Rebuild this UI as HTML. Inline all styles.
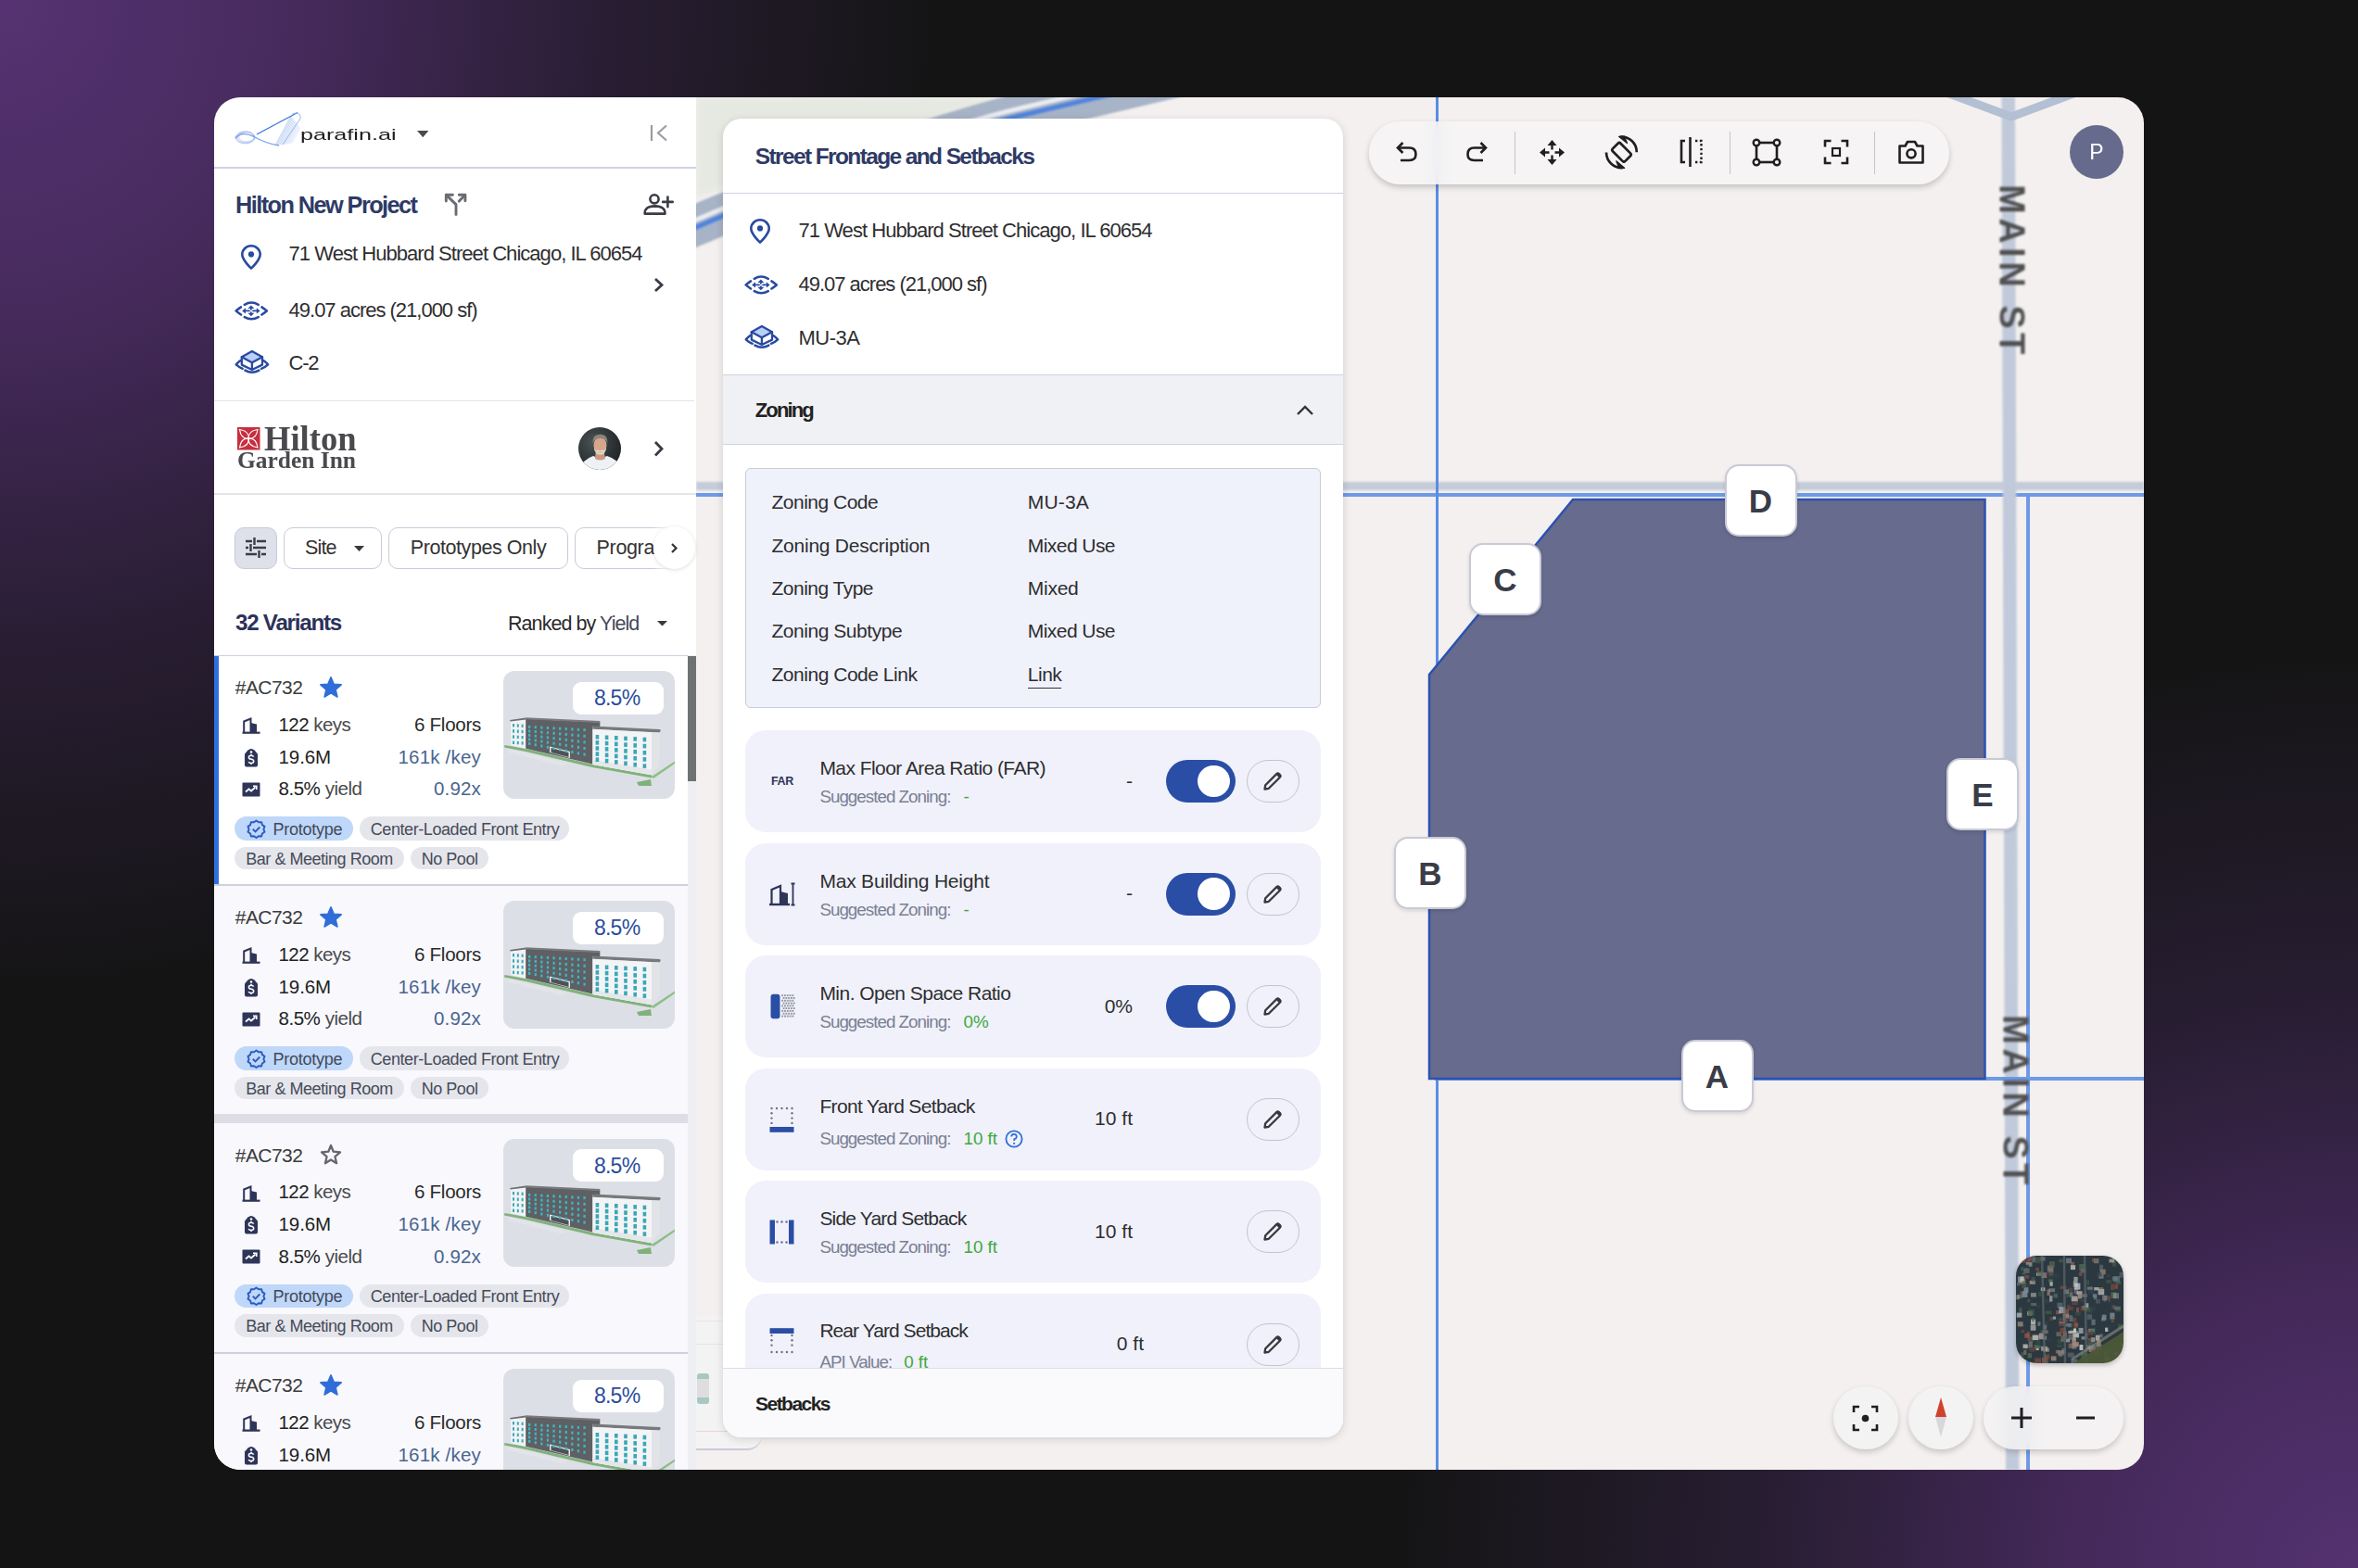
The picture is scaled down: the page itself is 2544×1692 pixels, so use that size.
<!DOCTYPE html>
<html><head><meta charset="utf-8"><style>
html,body{margin:0;padding:0;}
body{width:2544px;height:1692px;position:relative;overflow:hidden;
background:
 radial-gradient(ellipse 1020px 1080px at 0px 0px, rgba(86,50,114,1) 0%, rgba(78,46,104,0.88) 30%, rgba(60,38,80,0.5) 65%, rgba(20,20,20,0) 100%),
 radial-gradient(ellipse 1050px 1000px at 2544px 1692px, rgba(84,50,112,1) 0%, rgba(77,45,103,0.86) 28%, rgba(58,38,78,0.5) 62%, rgba(20,20,20,0) 100%),
 #141414;}
#win{position:absolute;left:0;top:0;width:2544px;height:1692px;clip-path:inset(105px 231px 106px 231px round 28px);}
</style></head><body><div id="win">
<div style="position:absolute;left:751.00px;top:105.00px;width:1562.00px;height:1481.00px;background:#f3f0ef;"></div>
<svg style="position:absolute;left:751.00px;top:105.00px;" width="400.00" height="130.00" viewBox="0 0 400 130"><path d="M0 0 L330 0 L0 108 Z" fill="#e6e9e1" style="filter:blur(3px)"/></svg>
<svg style="position:absolute;left:751.00px;top:105.00px;" width="700.00" height="240.00" viewBox="0 0 700 240"><g fill="none" style="filter:blur(0.8px)"><path d="M-40 155 L29 126 Q249 42 349 18 L560 -32" stroke="#a7b3c6" stroke-width="44"/><path d="M-40 149 L29 120 Q249 36 349 12 L560 -38" stroke="#e9ecf1" stroke-width="5"/><path d="M-40 157 L29 128 Q249 44 349 20 L560 -30" stroke="#4f83df" stroke-width="5"/></g></svg>
<div style="position:absolute;left:751.00px;top:519.50px;width:1562.00px;height:9.00px;background:#c5ccd9;filter:blur(1.2px);"></div>
<div style="position:absolute;left:751.00px;top:531.50px;width:1562.00px;height:4.00px;background:#6d9ae8;"></div>
<svg style="position:absolute;left:2150.00px;top:105.00px;" width="40.00" height="1481.00" viewBox="0 0 40 1481"><path d="M9.5 0 H24 L28.5 1481 H14Z" fill="#c1cadb" style="filter:blur(1px)"/></svg>
<svg style="position:absolute;left:2090.00px;top:100.00px;" width="150.00" height="34.00" viewBox="0 0 150 34"><path d="M10 0 L80 26 L150 0" stroke="#b3bfd2" stroke-width="9" fill="none"/></svg>
<div style="position:absolute;left:1548.50px;top:105.00px;width:3.50px;height:1481.00px;background:#5b8de6;"></div>
<div style="position:absolute;left:2186.00px;top:534.00px;width:4.00px;height:1052.00px;background:#6d9ae8;"></div>
<div style="position:absolute;left:1548.00px;top:1162.00px;width:765.00px;height:4.00px;background:#6d9ae8;"></div>
<svg style="position:absolute;left:1540.00px;top:537.00px;" width="604.00" height="630.00" viewBox="0 0 604 630"><path d="M157 2 L601.5 2 L601.5 627 L2 627 L2 191 Z" fill="#676b8d" stroke="#2c52b0" stroke-width="2.5"/></svg>
<div style="position:absolute;left:2169.5px;top:292.5px;transform:translate(-50%,-50%) rotate(90deg);font-family:'Liberation Sans',sans-serif;font-weight:700;font-size:38px;letter-spacing:4.5px;color:#505052;white-space:pre;filter:blur(0.9px);">MAIN ST</div>
<div style="position:absolute;left:2173.5px;top:1188.5px;transform:translate(-50%,-50%) rotate(90deg);font-family:'Liberation Sans',sans-serif;font-weight:700;font-size:38px;letter-spacing:4.5px;color:#505052;white-space:pre;filter:blur(0.9px);">MAIN ST</div>
<div style="position:absolute;left:1860.50px;top:501.00px;width:78.00px;height:78.00px;background:#fff;border:2.5px solid #c9cad6;box-sizing:border-box;border-radius:15px;box-shadow:0 2px 4px rgba(0,0,0,0.12);"></div>
<div style="position:absolute;left:1886.86px;top:522.87px;font-family:'Liberation Sans',sans-serif;font-size:35px;line-height:1;font-weight:700;color:#3a3c48;letter-spacing:0.000px;white-space:pre;">D</div>
<div style="position:absolute;left:1585.00px;top:586.00px;width:78.00px;height:78.00px;background:#fff;border:2.5px solid #c9cad6;box-sizing:border-box;border-radius:15px;box-shadow:0 2px 4px rgba(0,0,0,0.12);"></div>
<div style="position:absolute;left:1611.36px;top:607.87px;font-family:'Liberation Sans',sans-serif;font-size:35px;line-height:1;font-weight:700;color:#3a3c48;letter-spacing:0.000px;white-space:pre;">C</div>
<div style="position:absolute;left:2100.00px;top:818.00px;width:78.00px;height:78.00px;background:#fff;border:2.5px solid #c9cad6;box-sizing:border-box;border-radius:15px;box-shadow:0 2px 4px rgba(0,0,0,0.12);"></div>
<div style="position:absolute;left:2127.32px;top:839.87px;font-family:'Liberation Sans',sans-serif;font-size:35px;line-height:1;font-weight:700;color:#3a3c48;letter-spacing:0.000px;white-space:pre;">E</div>
<div style="position:absolute;left:1504.00px;top:903.00px;width:78.00px;height:78.00px;background:#fff;border:2.5px solid #c9cad6;box-sizing:border-box;border-radius:15px;box-shadow:0 2px 4px rgba(0,0,0,0.12);"></div>
<div style="position:absolute;left:1530.36px;top:924.87px;font-family:'Liberation Sans',sans-serif;font-size:35px;line-height:1;font-weight:700;color:#3a3c48;letter-spacing:0.000px;white-space:pre;">B</div>
<div style="position:absolute;left:1813.50px;top:1122.00px;width:78.00px;height:78.00px;background:#fff;border:2.5px solid #c9cad6;box-sizing:border-box;border-radius:15px;box-shadow:0 2px 4px rgba(0,0,0,0.12);"></div>
<div style="position:absolute;left:1839.86px;top:1143.87px;font-family:'Liberation Sans',sans-serif;font-size:35px;line-height:1;font-weight:700;color:#3a3c48;letter-spacing:0.000px;white-space:pre;">A</div>
<div style="position:absolute;left:1477.00px;top:131.00px;width:625.50px;height:68.00px;background:rgba(246,245,245,0.80);backdrop-filter:blur(7px);-webkit-backdrop-filter:blur(7px);border-radius:34px;box-shadow:0 3px 6px rgba(0,0,0,0.20);"></div>
<svg style="position:absolute;left:1504.00px;top:150.00px;" width="28.00" height="28.00" viewBox="0 0 28 28"><path d="M9.5 4 L4 9.5 L9.5 15" fill="none" stroke="#1f1f22" stroke-width="2.6"/><path d="M4.5 9.5 H16.5 Q23.5 9.5 23.5 16.5 Q23.5 23 16.5 23 H7" fill="none" stroke="#1f1f22" stroke-width="2.6"/></svg>
<svg style="position:absolute;left:1579.00px;top:150.00px;" width="28.00" height="28.00" viewBox="0 0 28 28"><path d="M18.5 4 L24 9.5 L18.5 15" fill="none" stroke="#1f1f22" stroke-width="2.6"/><path d="M23.5 9.5 H11.5 Q4.5 9.5 4.5 16.5 Q4.5 23 11.5 23 H21" fill="none" stroke="#1f1f22" stroke-width="2.6"/></svg>
<div style="position:absolute;left:1633.50px;top:141.50px;width:1.50px;height:46.20px;background:#c4c4cc;"></div>
<svg style="position:absolute;left:1660.00px;top:150.00px;" width="29.00" height="29.00" viewBox="0 0 29 29"><path d="M14.5 5 V11.5 M14.5 17.5 V24 M5 14.5 H11.5 M17.5 14.5 H24" stroke="#1f1f22" stroke-width="2.4"/><path d="M14.5 1 L9.5 7 H19.5Z M14.5 28 L9.5 22 H19.5Z M1 14.5 L7 9.5 V19.5Z M28 14.5 L22 9.5 V19.5Z" fill="#1f1f22"/></svg>
<svg style="position:absolute;left:1731.00px;top:146.00px;" width="37.00" height="37.00" viewBox="0 0 37 37"><rect x="9" y="12.3" width="19" height="12" rx="2" transform="rotate(45 18.5 18.3)" fill="none" stroke="#1f1f22" stroke-width="2.7"/><path d="M17 1.6 A16.6 16.6 0 0 1 34.8 18.3" fill="none" stroke="#1f1f22" stroke-width="2.7"/><path d="M15.5 1.4 L21.5 1.2 L24.5 8.6 Z" fill="#1f1f22" stroke="#1f1f22" stroke-width="1.2" stroke-linejoin="round"/><path d="M2 18.5 A16.6 16.6 0 0 0 20 35" fill="none" stroke="#1f1f22" stroke-width="2.7"/><path d="M21.6 35.3 L15.6 35.4 L12.8 27.8 Z" fill="#1f1f22" stroke="#1f1f22" stroke-width="1.2" stroke-linejoin="round"/></svg>
<svg style="position:absolute;left:1811.00px;top:147.00px;" width="29.00" height="34.00" viewBox="0 0 29 34"><path d="M7 5 H3 V28 H7" fill="none" stroke="#1f1f22" stroke-width="2.6"/><path d="M12.5 1 V33" stroke="#1f1f22" stroke-width="2.6"/><path d="M18 5 H24.5 V28 H18" fill="none" stroke="#1f1f22" stroke-width="2.4" stroke-dasharray="2.4 2.4"/></svg>
<div style="position:absolute;left:1865.50px;top:141.50px;width:1.50px;height:46.20px;background:#c4c4cc;"></div>
<svg style="position:absolute;left:1890.00px;top:149.00px;" width="32.00" height="31.00" viewBox="0 0 32 31"><rect x="5" y="5" width="22" height="21" fill="none" stroke="#1f1f22" stroke-width="2.6"/><g fill="#f6f5f5" stroke="#1f1f22" stroke-width="2.4"><circle cx="5" cy="5" r="3.3"/><circle cx="27" cy="5" r="3.3"/><circle cx="5" cy="26" r="3.3"/><circle cx="27" cy="26" r="3.3"/></g></svg>
<svg style="position:absolute;left:1967.00px;top:150.00px;" width="28.00" height="28.00" viewBox="0 0 28 28"><path d="M2 8.5 V2 H8.5 M19.5 2 H26 V8.5 M26 19.5 V26 H19.5 M8.5 26 H2 V19.5" fill="none" stroke="#1f1f22" stroke-width="2.6"/><rect x="10" y="10" width="8" height="8" fill="none" stroke="#1f1f22" stroke-width="2.2"/></svg>
<div style="position:absolute;left:2021.50px;top:141.50px;width:1.50px;height:46.20px;background:#c4c4cc;"></div>
<svg style="position:absolute;left:2047.00px;top:150.00px;" width="30.00" height="28.00" viewBox="0 0 30 28"><path d="M2.5 7.5 H8.5 L11 3 H19 L21.5 7.5 H27.5 V25.5 H2.5 Z" fill="none" stroke="#1f1f22" stroke-width="2.6" stroke-linejoin="round"/><circle cx="15" cy="15.8" r="4.6" fill="none" stroke="#1f1f22" stroke-width="2.6"/></svg>
<div style="position:absolute;left:2233.00px;top:135.00px;width:58.00px;height:58.00px;background:#666b8e;border-radius:50%;"></div>
<div style="position:absolute;left:2254.33px;top:153.03px;font-family:'Liberation Sans',sans-serif;font-size:23px;line-height:1;font-weight:400;color:#ffffff;letter-spacing:0.000px;white-space:pre;">P</div>
<div style="position:absolute;left:2175.2px;top:1355.2px;width:116px;height:116px;border-radius:22px;overflow:hidden;box-shadow:0 2px 5px rgba(0,0,0,0.25);"><svg width="116" height="116" viewBox="0 0 116 116" style="filter:blur(0.6px)"><rect width="116" height="116" fill="#2b3840"/><rect x="50.7" y="62.7" width="6.7" height="4.9" fill="#a88a7a" opacity="0.83"/><rect x="21.3" y="90.0" width="4.9" height="5.5" fill="#3f5a44" opacity="0.49"/><rect x="34.0" y="10.2" width="6.2" height="5.8" fill="#8f5a4c" opacity="0.72"/><rect x="44.4" y="50.7" width="6.0" height="5.6" fill="#7d8f98" opacity="0.46"/><rect x="59.2" y="6.7" width="3.8" height="4.0" fill="#8f5a4c" opacity="0.80"/><rect x="36.5" y="66.2" width="3.8" height="3.9" fill="#7e4a40" opacity="0.67"/><rect x="74.2" y="51.2" width="4.1" height="7.0" fill="#b9b6b0" opacity="0.77"/><rect x="35.3" y="25.7" width="4.2" height="3.3" fill="#b9b6b0" opacity="0.63"/><rect x="94.8" y="43.3" width="6.8" height="6.4" fill="#8f5a4c" opacity="0.55"/><rect x="103.8" y="5.9" width="4.5" height="5.8" fill="#4f6a50" opacity="0.48"/><rect x="70.5" y="87.2" width="4.1" height="3.3" fill="#cfd3d6" opacity="0.46"/><rect x="45.9" y="103.4" width="3.5" height="5.8" fill="#8f5a4c" opacity="0.48"/><rect x="89.3" y="19.9" width="5.2" height="4.8" fill="#6d7a80" opacity="0.89"/><rect x="86.2" y="47.0" width="4.5" height="4.6" fill="#6d7a80" opacity="0.45"/><rect x="96.8" y="109.2" width="5.4" height="7.0" fill="#8f5a4c" opacity="0.54"/><rect x="44.2" y="95.7" width="5.6" height="3.4" fill="#3f5a44" opacity="0.55"/><rect x="28.9" y="86.5" width="4.3" height="4.2" fill="#b9b6b0" opacity="0.48"/><rect x="23.4" y="71.3" width="3.1" height="4.5" fill="#7d8f98" opacity="0.65"/><rect x="107.4" y="54.2" width="5.3" height="6.5" fill="#3f5a44" opacity="0.73"/><rect x="34.8" y="25.6" width="5.4" height="5.9" fill="#3f5a44" opacity="0.78"/><rect x="105.3" y="22.0" width="6.8" height="6.5" fill="#7d8f98" opacity="0.49"/><rect x="5.3" y="12.2" width="5.0" height="4.0" fill="#4f6a50" opacity="0.57"/><rect x="92.3" y="66.8" width="4.2" height="3.7" fill="#b9b6b0" opacity="0.51"/><rect x="53.7" y="73.2" width="5.5" height="3.3" fill="#6d7a80" opacity="0.86"/><rect x="22.8" y="1.9" width="4.1" height="4.8" fill="#8f5a4c" opacity="0.47"/><rect x="31.6" y="59.5" width="6.9" height="3.4" fill="#3f5a44" opacity="0.85"/><rect x="109.8" y="73.6" width="5.8" height="5.3" fill="#3f5a44" opacity="0.72"/><rect x="103.4" y="53.2" width="4.4" height="4.2" fill="#8f5a4c" opacity="0.46"/><rect x="71.3" y="54.0" width="5.9" height="4.3" fill="#b9b6b0" opacity="0.48"/><rect x="61.2" y="82.5" width="6.6" height="5.9" fill="#3f5a44" opacity="0.81"/><rect x="102.5" y="39.4" width="5.7" height="6.6" fill="#4f6a50" opacity="0.87"/><rect x="3.4" y="56.0" width="3.1" height="5.6" fill="#4f6a50" opacity="0.71"/><rect x="68.2" y="9.0" width="5.6" height="7.0" fill="#4f6a50" opacity="0.78"/><rect x="43.5" y="82.3" width="5.3" height="4.8" fill="#a88a7a" opacity="0.49"/><rect x="84.0" y="3.3" width="5.4" height="4.9" fill="#6d7a80" opacity="0.88"/><rect x="12.6" y="87.4" width="5.6" height="4.9" fill="#8f5a4c" opacity="0.62"/><rect x="16.0" y="68.5" width="5.1" height="6.0" fill="#cfd3d6" opacity="0.75"/><rect x="49.5" y="99.9" width="4.3" height="5.7" fill="#6d7a80" opacity="0.74"/><rect x="90.0" y="84.5" width="3.8" height="3.9" fill="#6d7a80" opacity="0.71"/><rect x="35.4" y="15.3" width="5.0" height="6.3" fill="#8f5a4c" opacity="0.77"/><rect x="106.4" y="31.0" width="3.7" height="4.8" fill="#7e4a40" opacity="0.87"/><rect x="93.1" y="42.8" width="5.1" height="5.7" fill="#7d8f98" opacity="0.65"/><rect x="8.4" y="3.5" width="6.5" height="3.2" fill="#7e4a40" opacity="0.71"/><rect x="34.6" y="88.6" width="3.1" height="3.5" fill="#34444c" opacity="0.54"/><rect x="86.2" y="29.8" width="6.1" height="6.2" fill="#2a3a44" opacity="0.50"/><rect x="12.2" y="60.0" width="5.6" height="4.5" fill="#b9b6b0" opacity="0.76"/><rect x="22.3" y="53.2" width="3.7" height="3.0" fill="#34444c" opacity="0.69"/><rect x="4.1" y="25.4" width="6.1" height="5.2" fill="#a88a7a" opacity="0.68"/><rect x="111.6" y="17.8" width="6.4" height="5.8" fill="#6d7a80" opacity="0.49"/><rect x="104.5" y="80.9" width="3.5" height="4.8" fill="#2a3a44" opacity="0.85"/><rect x="0.8" y="61.6" width="5.6" height="5.0" fill="#cfd3d6" opacity="0.66"/><rect x="72.9" y="22.9" width="5.9" height="6.3" fill="#2a3a44" opacity="0.87"/><rect x="13.8" y="27.1" width="4.6" height="3.4" fill="#7e4a40" opacity="0.69"/><rect x="88.6" y="35.9" width="6.6" height="6.4" fill="#cfd3d6" opacity="0.68"/><rect x="4.2" y="38.3" width="4.7" height="4.1" fill="#8f5a4c" opacity="0.55"/><rect x="97.2" y="48.0" width="3.1" height="5.1" fill="#2a3a44" opacity="0.80"/><rect x="15.7" y="16.7" width="5.1" height="5.9" fill="#2a3a44" opacity="0.76"/><rect x="105.9" y="55.2" width="6.8" height="3.3" fill="#6d7a80" opacity="0.65"/><rect x="62.6" y="93.1" width="5.2" height="3.7" fill="#a88a7a" opacity="0.83"/><rect x="62.7" y="34.9" width="4.5" height="6.4" fill="#7d8f98" opacity="0.54"/><rect x="95.3" y="108.5" width="5.1" height="5.3" fill="#6d7a80" opacity="0.63"/><rect x="12.8" y="0.6" width="4.5" height="5.2" fill="#8f5a4c" opacity="0.68"/><rect x="44.9" y="89.7" width="5.3" height="5.0" fill="#3f5a44" opacity="0.48"/><rect x="60.3" y="46.3" width="6.8" height="6.7" fill="#7e4a40" opacity="0.56"/><rect x="55.2" y="38.0" width="6.6" height="6.7" fill="#34444c" opacity="0.69"/><rect x="12.2" y="47.0" width="3.1" height="4.0" fill="#8f5a4c" opacity="0.47"/><rect x="17.4" y="1.3" width="4.1" height="5.9" fill="#6d7a80" opacity="0.73"/><rect x="11.7" y="81.9" width="3.5" height="5.0" fill="#7e4a40" opacity="0.77"/><rect x="78.6" y="98.4" width="3.1" height="5.5" fill="#a88a7a" opacity="0.73"/><rect x="60.3" y="96.7" width="5.1" height="3.9" fill="#6d7a80" opacity="0.83"/><rect x="68.5" y="96.0" width="3.9" height="6.0" fill="#cfd3d6" opacity="0.86"/><rect x="35.4" y="35.3" width="6.7" height="3.9" fill="#6d7a80" opacity="0.85"/><rect x="15.0" y="26.8" width="5.9" height="4.0" fill="#b9b6b0" opacity="0.65"/><rect x="105.4" y="60.8" width="5.8" height="3.8" fill="#2a3a44" opacity="0.76"/><rect x="2.0" y="22.5" width="5.7" height="6.6" fill="#cfd3d6" opacity="0.50"/><rect x="56.6" y="84.9" width="5.0" height="5.7" fill="#6d7a80" opacity="0.81"/><rect x="54.0" y="2.7" width="6.0" height="5.5" fill="#7d8f98" opacity="0.67"/><rect x="21.2" y="12.9" width="3.7" height="3.6" fill="#7e4a40" opacity="0.87"/><rect x="10.7" y="6.9" width="6.8" height="4.8" fill="#b9b6b0" opacity="0.60"/><rect x="52.3" y="57.7" width="4.7" height="5.4" fill="#8f5a4c" opacity="0.74"/><rect x="4.6" y="22.4" width="4.6" height="4.4" fill="#cfd3d6" opacity="0.63"/><rect x="21.9" y="18.5" width="5.1" height="3.1" fill="#b9b6b0" opacity="0.81"/><rect x="78.9" y="96.4" width="5.5" height="4.6" fill="#7d8f98" opacity="0.54"/><rect x="65.5" y="38.2" width="6.0" height="4.1" fill="#b9b6b0" opacity="0.78"/><rect x="87.1" y="91.2" width="4.6" height="6.6" fill="#a88a7a" opacity="0.76"/><rect x="85.9" y="85.7" width="4.6" height="5.9" fill="#b9b6b0" opacity="0.81"/><rect x="33.8" y="11.3" width="6.6" height="7.0" fill="#7d8f98" opacity="0.47"/><rect x="30.6" y="107.7" width="4.2" height="3.9" fill="#4f6a50" opacity="0.71"/><rect x="59.7" y="43.6" width="7.0" height="5.6" fill="#b9b6b0" opacity="0.79"/><rect x="109.8" y="2.6" width="5.5" height="6.0" fill="#7e4a40" opacity="0.65"/><rect x="56.5" y="85.3" width="5.6" height="3.0" fill="#7e4a40" opacity="0.56"/><rect x="101.4" y="61.6" width="5.0" height="6.9" fill="#7d8f98" opacity="0.83"/><rect x="11.2" y="49.8" width="5.6" height="5.2" fill="#2a3a44" opacity="0.79"/><rect x="5.1" y="104.2" width="3.6" height="4.9" fill="#3f5a44" opacity="0.84"/><rect x="60.7" y="66.8" width="4.7" height="5.0" fill="#7e4a40" opacity="0.69"/><rect x="67.0" y="40.9" width="4.1" height="5.6" fill="#a88a7a" opacity="0.87"/><rect x="74.3" y="83.7" width="3.1" height="6.1" fill="#7d8f98" opacity="0.47"/><rect x="17.5" y="84.5" width="4.6" height="6.6" fill="#4f6a50" opacity="0.47"/><rect x="110.7" y="105.8" width="3.3" height="6.6" fill="#4f6a50" opacity="0.77"/><rect x="28.1" y="84.6" width="3.2" height="3.4" fill="#34444c" opacity="0.51"/><rect x="107.5" y="27.5" width="5.8" height="3.2" fill="#4f6a50" opacity="0.66"/><rect x="22.8" y="5.8" width="5.1" height="3.5" fill="#34444c" opacity="0.51"/><rect x="46.7" y="67.3" width="5.6" height="5.7" fill="#cfd3d6" opacity="0.80"/><rect x="59.4" y="111.7" width="6.8" height="5.9" fill="#6d7a80" opacity="0.67"/><rect x="56.3" y="34.6" width="5.0" height="6.4" fill="#7e4a40" opacity="0.57"/><rect x="76.7" y="63.3" width="5.4" height="5.5" fill="#6d7a80" opacity="0.54"/><rect x="27.9" y="109.7" width="6.7" height="6.5" fill="#8f5a4c" opacity="0.73"/><rect x="1.1" y="29.1" width="3.1" height="3.2" fill="#6d7a80" opacity="0.69"/><rect x="8.1" y="9.7" width="5.7" height="5.2" fill="#2a3a44" opacity="0.89"/><rect x="54.2" y="39.7" width="4.4" height="5.0" fill="#3f5a44" opacity="0.83"/><rect x="8.3" y="13.4" width="6.2" height="5.5" fill="#6d7a80" opacity="0.65"/><rect x="83.7" y="43.7" width="3.6" height="3.6" fill="#7d8f98" opacity="0.60"/><rect x="61.4" y="83.6" width="6.7" height="4.7" fill="#cfd3d6" opacity="0.71"/><rect x="51.7" y="36.3" width="5.2" height="4.7" fill="#7d8f98" opacity="0.67"/><rect x="76.8" y="33.5" width="6.1" height="3.3" fill="#6d7a80" opacity="0.86"/><rect x="67.6" y="77.9" width="5.0" height="6.1" fill="#cfd3d6" opacity="0.58"/><rect x="16.0" y="40.1" width="5.9" height="4.5" fill="#b9b6b0" opacity="0.60"/><rect x="49.4" y="66.6" width="6.6" height="5.7" fill="#7e4a40" opacity="0.65"/><rect x="89.9" y="34.1" width="4.3" height="4.6" fill="#a88a7a" opacity="0.56"/><rect x="40.5" y="40.9" width="4.5" height="4.6" fill="#4f6a50" opacity="0.81"/><rect x="82.7" y="41.2" width="4.6" height="3.6" fill="#7d8f98" opacity="0.70"/><rect x="19.8" y="85.0" width="6.5" height="4.1" fill="#8f5a4c" opacity="0.55"/><rect x="6.5" y="17.8" width="4.2" height="3.1" fill="#4f6a50" opacity="0.48"/><rect x="61.2" y="88.3" width="3.3" height="3.3" fill="#b9b6b0" opacity="0.85"/><rect x="9.5" y="71.0" width="3.6" height="6.0" fill="#2a3a44" opacity="0.64"/><rect x="79.8" y="54.8" width="6.6" height="4.4" fill="#34444c" opacity="0.63"/><rect x="37.8" y="108.4" width="5.7" height="5.0" fill="#a88a7a" opacity="0.81"/><rect x="8.1" y="69.2" width="3.2" height="6.0" fill="#2a3a44" opacity="0.61"/><rect x="0.4" y="42.3" width="3.4" height="4.9" fill="#a88a7a" opacity="0.74"/><rect x="58.7" y="79.5" width="6.2" height="4.7" fill="#4f6a50" opacity="0.86"/><rect x="27.5" y="18.2" width="5.5" height="5.7" fill="#cfd3d6" opacity="0.54"/><rect x="47.6" y="32.7" width="6.9" height="3.2" fill="#7e4a40" opacity="0.78"/><rect x="34.0" y="17.4" width="6.7" height="6.6" fill="#34444c" opacity="0.46"/><rect x="53.9" y="89.6" width="4.3" height="3.8" fill="#cfd3d6" opacity="0.55"/><rect x="26.4" y="80.3" width="5.4" height="3.9" fill="#3f5a44" opacity="0.85"/><rect x="45.1" y="102.0" width="6.7" height="5.5" fill="#a88a7a" opacity="0.67"/><rect x="29.2" y="99.4" width="6.7" height="4.4" fill="#a88a7a" opacity="0.80"/><rect x="10.4" y="96.6" width="4.6" height="3.9" fill="#3f5a44" opacity="0.81"/><rect x="43.1" y="59.1" width="5.1" height="4.1" fill="#8f5a4c" opacity="0.75"/><rect x="26.6" y="1.2" width="4.9" height="4.5" fill="#6d7a80" opacity="0.77"/><rect x="67.9" y="17.6" width="3.6" height="4.3" fill="#7e4a40" opacity="0.86"/><rect x="90.7" y="14.7" width="6.0" height="5.5" fill="#a88a7a" opacity="0.69"/><rect x="16.9" y="86.3" width="3.0" height="6.3" fill="#3f5a44" opacity="0.82"/><rect x="9.2" y="30.2" width="5.9" height="3.4" fill="#34444c" opacity="0.76"/><rect x="9.3" y="83.8" width="5.2" height="5.0" fill="#8f5a4c" opacity="0.81"/><rect x="46.7" y="102.7" width="3.4" height="6.3" fill="#6d7a80" opacity="0.47"/><rect x="46.3" y="55.3" width="6.8" height="6.9" fill="#cfd3d6" opacity="0.59"/><rect x="8.5" y="34.2" width="4.9" height="5.9" fill="#cfd3d6" opacity="0.48"/><rect x="15.7" y="74.8" width="5.7" height="6.0" fill="#b9b6b0" opacity="0.74"/><rect x="1.4" y="42.2" width="5.8" height="3.9" fill="#7d8f98" opacity="0.50"/><rect x="86.4" y="95.9" width="6.4" height="5.9" fill="#7d8f98" opacity="0.52"/><rect x="70.3" y="105.0" width="6.0" height="6.8" fill="#4f6a50" opacity="0.70"/><rect x="9.7" y="21.1" width="4.5" height="3.4" fill="#7e4a40" opacity="0.88"/><rect x="63.0" y="81.1" width="4.3" height="6.3" fill="#b9b6b0" opacity="0.50"/><rect x="69.6" y="14.7" width="5.5" height="3.7" fill="#6d7a80" opacity="0.63"/><rect x="93.7" y="66.4" width="3.4" height="3.9" fill="#3f5a44" opacity="0.89"/><rect x="48.6" y="86.4" width="4.4" height="6.3" fill="#a88a7a" opacity="0.51"/><rect x="23.0" y="16.6" width="5.8" height="4.9" fill="#4f6a50" opacity="0.73"/><rect x="81.4" y="68.7" width="4.3" height="6.2" fill="#6d7a80" opacity="0.75"/><rect x="68.2" y="2.1" width="4.3" height="4.4" fill="#2a3a44" opacity="0.65"/><rect x="62.4" y="22.9" width="4.3" height="4.2" fill="#b9b6b0" opacity="0.73"/><rect x="17.7" y="85.8" width="6.6" height="5.2" fill="#cfd3d6" opacity="0.73"/><rect x="57.5" y="64.3" width="3.8" height="6.7" fill="#6d7a80" opacity="0.71"/><rect x="3.0" y="73.9" width="6.1" height="3.5" fill="#34444c" opacity="0.71"/><rect x="78.1" y="36.9" width="6.7" height="4.4" fill="#34444c" opacity="0.85"/><rect x="50.7" y="81.7" width="4.0" height="5.3" fill="#a88a7a" opacity="0.70"/><rect x="62.8" y="29.6" width="6.6" height="7.0" fill="#cfd3d6" opacity="0.72"/><rect x="13.7" y="92.4" width="4.2" height="6.6" fill="#6d7a80" opacity="0.79"/><rect x="40.7" y="18.6" width="5.4" height="6.2" fill="#34444c" opacity="0.46"/><rect x="20.2" y="110.5" width="6.8" height="5.6" fill="#7e4a40" opacity="0.79"/><rect x="94.9" y="101.5" width="5.5" height="5.6" fill="#8f5a4c" opacity="0.52"/><rect x="46.1" y="3.7" width="5.1" height="3.5" fill="#4f6a50" opacity="0.53"/><rect x="58.2" y="29.5" width="5.3" height="4.3" fill="#2a3a44" opacity="0.80"/><rect x="80.8" y="88.2" width="4.6" height="5.0" fill="#b9b6b0" opacity="0.66"/><rect x="46.1" y="69.9" width="5.8" height="6.0" fill="#7e4a40" opacity="0.67"/><rect x="111.4" y="93.9" width="6.4" height="4.6" fill="#4f6a50" opacity="0.50"/><rect x="12.8" y="105.2" width="4.3" height="5.1" fill="#4f6a50" opacity="0.86"/><rect x="35.9" y="6.1" width="5.9" height="6.6" fill="#4f6a50" opacity="0.72"/><rect x="84.2" y="34.1" width="5.4" height="3.3" fill="#b9b6b0" opacity="0.83"/><rect x="27.1" y="97.8" width="6.9" height="4.9" fill="#b9b6b0" opacity="0.69"/><rect x="26.8" y="34.3" width="4.6" height="3.9" fill="#b9b6b0" opacity="0.90"/><rect x="81.8" y="97.6" width="4.5" height="5.2" fill="#7d8f98" opacity="0.81"/><rect x="24.8" y="83.6" width="5.3" height="6.6" fill="#b9b6b0" opacity="0.68"/><rect x="14.6" y="98.8" width="5.3" height="4.8" fill="#7e4a40" opacity="0.56"/><rect x="33.5" y="36.4" width="3.3" height="6.6" fill="#a88a7a" opacity="0.63"/><rect x="39.9" y="65.6" width="3.2" height="3.1" fill="#cfd3d6" opacity="0.59"/><rect x="55.8" y="104.6" width="6.9" height="4.9" fill="#6d7a80" opacity="0.54"/><rect x="96.2" y="77.6" width="3.2" height="4.3" fill="#cfd3d6" opacity="0.85"/><rect x="1.8" y="71.2" width="5.8" height="5.2" fill="#a88a7a" opacity="0.73"/><rect x="21.4" y="98.6" width="3.2" height="3.4" fill="#cfd3d6" opacity="0.88"/><rect x="30.7" y="47.1" width="6.5" height="4.3" fill="#34444c" opacity="0.64"/><rect x="19.0" y="96.5" width="3.5" height="5.8" fill="#7e4a40" opacity="0.53"/><rect x="26.4" y="74.4" width="6.2" height="4.5" fill="#2a3a44" opacity="0.69"/><rect x="13.0" y="57.8" width="6.9" height="6.6" fill="#3f5a44" opacity="0.75"/><rect x="31.0" y="71.7" width="3.4" height="6.9" fill="#34444c" opacity="0.86"/><rect x="8.3" y="101.6" width="3.0" height="5.3" fill="#a88a7a" opacity="0.56"/><rect x="90.0" y="9.8" width="4.1" height="6.0" fill="#6d7a80" opacity="0.53"/><rect x="82.2" y="3.2" width="6.2" height="3.6" fill="#8f5a4c" opacity="0.73"/><rect x="102.6" y="65.5" width="3.0" height="6.6" fill="#8f5a4c" opacity="0.53"/><rect x="62.3" y="72.2" width="4.4" height="5.6" fill="#8f5a4c" opacity="0.68"/><rect x="56.6" y="94.7" width="5.7" height="5.1" fill="#a88a7a" opacity="0.53"/><rect x="87.3" y="18.5" width="5.4" height="3.9" fill="#34444c" opacity="0.70"/><rect x="28.7" y="80.2" width="5.9" height="4.0" fill="#a88a7a" opacity="0.55"/><rect x="65.0" y="55.9" width="3.1" height="5.4" fill="#8f5a4c" opacity="0.71"/><rect x="97.8" y="20.2" width="3.6" height="3.1" fill="#34444c" opacity="0.81"/><rect x="56.4" y="81.0" width="6.4" height="3.1" fill="#b9b6b0" opacity="0.86"/><rect x="63.7" y="60.8" width="6.2" height="4.0" fill="#3f5a44" opacity="0.47"/><rect x="47.6" y="77.9" width="6.3" height="6.0" fill="#7e4a40" opacity="0.79"/><rect x="55.8" y="72.8" width="5.0" height="4.5" fill="#6d7a80" opacity="0.52"/><rect x="77.4" y="93.1" width="6.1" height="3.2" fill="#4f6a50" opacity="0.66"/><rect x="78.2" y="78.8" width="6.8" height="3.5" fill="#7d8f98" opacity="0.89"/><rect x="16.2" y="51.0" width="6.0" height="3.2" fill="#6d7a80" opacity="0.63"/><rect x="58.9" y="10.2" width="5.2" height="4.9" fill="#b9b6b0" opacity="0.89"/><rect x="76.1" y="80.3" width="6.9" height="5.4" fill="#7e4a40" opacity="0.56"/><rect x="61.8" y="27.1" width="4.8" height="6.7" fill="#cfd3d6" opacity="0.59"/><rect x="106.0" y="103.4" width="3.9" height="3.6" fill="#7d8f98" opacity="0.74"/><rect x="6.6" y="38.4" width="5.8" height="6.5" fill="#7d8f98" opacity="0.87"/><rect x="19.9" y="96.3" width="6.7" height="3.9" fill="#4f6a50" opacity="0.80"/><rect x="24.1" y="38.9" width="3.7" height="5.2" fill="#3f5a44" opacity="0.67"/><rect x="44.8" y="66.5" width="6.0" height="4.9" fill="#34444c" opacity="0.90"/><rect x="76.1" y="96.6" width="3.8" height="4.5" fill="#b9b6b0" opacity="0.47"/><rect x="31.0" y="106.3" width="5.5" height="5.1" fill="#7e4a40" opacity="0.68"/><rect x="63.5" y="72.7" width="3.9" height="3.4" fill="#8f5a4c" opacity="0.52"/><rect x="104.9" y="40.3" width="6.1" height="5.9" fill="#b9b6b0" opacity="0.46"/><rect x="36.1" y="43.1" width="3.3" height="6.5" fill="#cfd3d6" opacity="0.57"/><rect x="98.4" y="75.0" width="4.2" height="5.4" fill="#34444c" opacity="0.47"/><rect x="16.9" y="66.7" width="3.1" height="4.2" fill="#4f6a50" opacity="0.67"/><rect x="77.7" y="57.9" width="5.2" height="4.3" fill="#34444c" opacity="0.75"/><rect x="16.5" y="22.9" width="4.1" height="5.9" fill="#4f6a50" opacity="0.51"/><rect x="57.9" y="39.8" width="3.4" height="4.5" fill="#7d8f98" opacity="0.55"/><rect x="4.6" y="2.7" width="5.5" height="5.3" fill="#7e4a40" opacity="0.75"/><rect x="7.5" y="95.5" width="5.2" height="4.4" fill="#b9b6b0" opacity="0.88"/><rect x="97.3" y="26.3" width="5.5" height="3.4" fill="#4f6a50" opacity="0.50"/><rect x="55.2" y="54.9" width="6.7" height="4.1" fill="#7e4a40" opacity="0.55"/><rect x="103.7" y="22.6" width="6.1" height="4.4" fill="#6d7a80" opacity="0.68"/><rect x="83.2" y="101.6" width="6.2" height="4.9" fill="#7e4a40" opacity="0.77"/><rect x="62.0" y="78.4" width="3.1" height="4.6" fill="#cfd3d6" opacity="0.86"/><rect x="102.2" y="30.5" width="4.5" height="6.4" fill="#7e4a40" opacity="0.66"/><rect x="36.5" y="28.4" width="3.1" height="4.4" fill="#cfd3d6" opacity="0.70"/><rect x="29.3" y="74.8" width="3.7" height="4.9" fill="#7d8f98" opacity="0.60"/><rect x="100.5" y="3.5" width="5.8" height="3.9" fill="#b9b6b0" opacity="0.73"/><rect x="69.5" y="46.0" width="4.7" height="4.1" fill="#34444c" opacity="0.85"/><rect x="42.8" y="101.9" width="3.2" height="3.5" fill="#a88a7a" opacity="0.57"/><rect x="55.4" y="53.0" width="3.1" height="5.4" fill="#7e4a40" opacity="0.55"/><rect x="76.2" y="26.3" width="3.0" height="5.2" fill="#4f6a50" opacity="0.45"/><rect x="61.3" y="95.1" width="6.1" height="3.3" fill="#a88a7a" opacity="0.85"/><rect x="77.4" y="89.2" width="4.1" height="3.4" fill="#8f5a4c" opacity="0.59"/><rect x="80.2" y="77.9" width="5.7" height="6.9" fill="#3f5a44" opacity="0.52"/><rect x="69.6" y="55.0" width="5.3" height="4.5" fill="#7e4a40" opacity="0.62"/><rect x="74.8" y="55.8" width="5.6" height="4.4" fill="#3f5a44" opacity="0.86"/><rect x="82.6" y="98.3" width="7.0" height="6.3" fill="#7e4a40" opacity="0.50"/><rect x="50.6" y="86.5" width="4.9" height="3.7" fill="#4f6a50" opacity="0.84"/><rect x="6.0" y="28.4" width="5.0" height="6.2" fill="#4f6a50" opacity="0.56"/><rect x="71.1" y="41.2" width="5.7" height="3.7" fill="#6d7a80" opacity="0.83"/><rect x="92.8" y="63.6" width="4.7" height="5.8" fill="#7d8f98" opacity="0.78"/><rect x="30.1" y="18.0" width="3.8" height="5.5" fill="#7e4a40" opacity="0.55"/><rect x="20.7" y="1.5" width="5.3" height="6.8" fill="#3f5a44" opacity="0.57"/><rect x="30.4" y="28.2" width="5.7" height="4.5" fill="#2a3a44" opacity="0.89"/><rect x="5.5" y="79.9" width="3.5" height="3.2" fill="#7e4a40" opacity="0.61"/><rect x="60.3" y="89.8" width="4.6" height="6.6" fill="#a88a7a" opacity="0.84"/><path d="M28 0 L31 116 M52 0 L53 116 M74 0 L76 116" stroke="#5d666c" stroke-width="2.5" opacity="0.7"/><path d="M62 116 L116 82 L116 116Z" fill="#4d5a36" opacity="0.9"/><path d="M60 112 L116 76" stroke="#8d9080" stroke-width="3" opacity="0.6"/></svg></div>
<div style="position:absolute;left:1977.60px;top:1495.50px;width:70.00px;height:68.90px;background:#f4f3f3;border-radius:50%;box-shadow:0 3px 6px rgba(0,0,0,0.18);"></div>
<svg style="position:absolute;left:1998.00px;top:1516.00px;" width="29.00" height="29.00" viewBox="0 0 29 29"><path d="M2 8 V2 H8 M21 2 H27 V8 M27 21 V27 H21 M8 27 H2 V21" fill="none" stroke="#1f1f22" stroke-width="2.6"/><circle cx="14.5" cy="14.5" r="3.8" fill="#1f1f22"/></svg>
<div style="position:absolute;left:2059.00px;top:1495.50px;width:69.70px;height:68.90px;background:#f4f3f3;border-radius:50%;box-shadow:0 3px 6px rgba(0,0,0,0.18);"></div>
<svg style="position:absolute;left:2083.00px;top:1507.00px;" width="22.00" height="46.00" viewBox="0 0 22 46"><path d="M11 1 L17 22 H5 Z" fill="#d2412c"/><path d="M5 22 H17 L11 44 Z" fill="#d8d8dc"/></svg>
<div style="position:absolute;left:2140.00px;top:1495.50px;width:151.30px;height:68.90px;background:rgba(244,243,243,0.80);backdrop-filter:blur(7px);border-radius:35px;box-shadow:0 3px 6px rgba(0,0,0,0.18);"></div>
<svg style="position:absolute;left:2167.00px;top:1516.00px;" width="28.00" height="28.00" viewBox="0 0 28 28"><path d="M14 3 V25 M3 14 H25" stroke="#1f1f22" stroke-width="3"/></svg>
<svg style="position:absolute;left:2236.00px;top:1516.00px;" width="28.00" height="28.00" viewBox="0 0 28 28"><path d="M4 14 H24" stroke="#1f1f22" stroke-width="3"/></svg>
<div style="position:absolute;left:231.00px;top:105.00px;width:520.00px;height:1481.00px;background:#ffffff;"></div>
<div style="position:absolute;left:231.00px;top:180.00px;width:520.00px;height:1.50px;background:#cfd2e2;"></div>
<svg style="position:absolute;left:253.00px;top:120.00px;" width="74.00" height="40.00" viewBox="0 0 74 40"><ellipse cx="11.5" cy="28.5" rx="10.5" ry="6.5" fill="none" stroke="#7ea3ea" stroke-width="0.6" opacity="0.70"/><ellipse cx="11.8" cy="28.3" rx="10.0" ry="6.2" fill="none" stroke="#7ea3ea" stroke-width="0.6" opacity="0.62"/><ellipse cx="12.1" cy="28.1" rx="9.5" ry="5.9" fill="none" stroke="#7ea3ea" stroke-width="0.6" opacity="0.54"/><ellipse cx="12.4" cy="27.9" rx="9.0" ry="5.6" fill="none" stroke="#7ea3ea" stroke-width="0.6" opacity="0.46"/><ellipse cx="12.7" cy="27.7" rx="8.5" ry="5.3" fill="none" stroke="#7ea3ea" stroke-width="0.6" opacity="0.38"/><ellipse cx="13.0" cy="27.5" rx="8.0" ry="5.0" fill="none" stroke="#7ea3ea" stroke-width="0.6" opacity="0.30"/><path d="M44.0 37.0 L61.0 5.0" stroke="#6d98e6" stroke-width="0.6" opacity="0.75"/><path d="M45.6 36.8 L61.9 6.2" stroke="#6d98e6" stroke-width="0.6" opacity="0.71"/><path d="M47.2 36.6 L62.8 7.4" stroke="#6d98e6" stroke-width="0.6" opacity="0.67"/><path d="M48.8 36.4 L63.7 8.6" stroke="#6d98e6" stroke-width="0.6" opacity="0.63"/><path d="M50.4 36.2 L64.6 9.8" stroke="#6d98e6" stroke-width="0.6" opacity="0.59"/><path d="M52.0 36.0 L65.5 11.0" stroke="#6d98e6" stroke-width="0.6" opacity="0.55"/><path d="M53.6 35.8 L66.4 12.2" stroke="#6d98e6" stroke-width="0.6" opacity="0.51"/><path d="M55.2 35.6 L67.3 13.4" stroke="#6d98e6" stroke-width="0.6" opacity="0.47"/><path d="M56.8 35.4 L68.2 14.6" stroke="#6d98e6" stroke-width="0.6" opacity="0.43"/><path d="M58.4 35.2 L69.1 15.8" stroke="#6d98e6" stroke-width="0.6" opacity="0.39"/><path d="M60.0 35.0 L70.0 17.0" stroke="#6d98e6" stroke-width="0.6" opacity="0.35"/><path d="M61.6 34.8 L70.9 18.2" stroke="#6d98e6" stroke-width="0.6" opacity="0.31"/><path d="M1 29 Q8 21 20 27 Q34 35 48 37" fill="none" stroke="#5f8fe4" stroke-width="1.4" opacity="0.8"/><path d="M24 25 L68 1.5" stroke="#3b72d9" stroke-width="1.3"/><path d="M62 3 Q72 0 71 8 L52 36" fill="none" stroke="#8fb0ee" stroke-width="1.2" opacity="0.7"/></svg>
<div style="position:absolute;left:323.70px;top:136.81px;font-family:'Liberation Sans',sans-serif;font-size:17px;line-height:1;font-weight:400;color:#1e1e1e;letter-spacing:0.000px;white-space:pre;transform:scaleX(1.4799);transform-origin:0 0;">parafin.ai</div>
<svg style="position:absolute;left:449.50px;top:141.00px;" width="12.50" height="7.20" viewBox="0 0 12.5 7.2"><path d="M0 0 L12.5 0 L6.25 7.2 Z" fill="#4a4a50"/></svg>
<svg style="position:absolute;left:700.00px;top:133.00px;" width="22.00" height="21.00" viewBox="0 0 22 21"><path d="M3 2 V19" stroke="#9c9ca4" stroke-width="2.2"/><path d="M19 2.5 L10 10.5 L19 18.5" stroke="#9c9ca4" stroke-width="2.2" fill="none"/></svg>
<div style="position:absolute;left:254.00px;top:208.58px;font-family:'Liberation Sans',sans-serif;font-size:25.3px;line-height:1;font-weight:700;color:#2e3a66;letter-spacing:-1.556px;white-space:pre;">Hilton New Project</div>
<svg style="position:absolute;left:478.00px;top:207.00px;" width="28.00" height="28.00" viewBox="0 0 28 28"><g fill="none" stroke="#6a6c73" stroke-width="2.9" stroke-linecap="round" stroke-linejoin="round"><path d="M10.4 3.2 H3.3 V10.1"/><path d="M3.6 3.6 L14 13.6 V24.6"/><path d="M17.3 3.2 H23.9 V9.8"/><path d="M23.4 3.7 L17.3 10.1"/></g></svg>
<svg style="position:absolute;left:692.00px;top:207.00px;" width="36.00" height="27.00" viewBox="0 0 36 27"><g fill="none" stroke="#3a3c44" stroke-width="2.6" stroke-linecap="round"><circle cx="14" cy="7.8" r="4.6"/><path d="M3.7 23.6 Q3.2 15.6 14.6 15.4 Q25.8 15.6 25.4 23.6 Z" stroke-linejoin="round"/><path d="M28.4 5.6 V16.2 M23.1 10.9 H33.7"/></g></svg>
<svg style="position:absolute;left:258.50px;top:262.50px;" width="24.00" height="29.00" viewBox="0 0 24 29"><path d="M12 2.3 C6.6 2.3 2.3 6.5 2.3 11.6 C2.3 17.8 12 26.6 12 26.6 C12 26.6 21.7 17.8 21.7 11.6 C21.7 6.5 17.4 2.3 12 2.3 Z" fill="none" stroke="#2a4aa0" stroke-width="2.6" stroke-linejoin="round"/><circle cx="12" cy="11.4" r="3.1" fill="#2a4aa0"/></svg>
<div style="position:absolute;left:311.60px;top:263.37px;font-family:'Liberation Sans',sans-serif;font-size:22px;line-height:1;font-weight:400;color:#2e2e30;letter-spacing:-0.962px;white-space:pre;">71 West Hubbard Street Chicago, IL 60654</div>
<svg style="position:absolute;left:704.50px;top:299.00px;" width="12.00" height="17.00" viewBox="0 0 12 17"><path d="M2 2 L9 8.5 L2 15" stroke="#3a3a45" stroke-width="2.8" fill="none" stroke-linecap="butt"/></svg>
<svg style="position:absolute;left:252.50px;top:324.50px;" width="37.00" height="22.00" viewBox="0 0 37 22"><g fill="none" stroke="#2a4aa0" stroke-width="2.5" stroke-linecap="round" stroke-linejoin="round"><path d="M10.8 3.8 Q18.3 -0.6 25.8 3.8"/><path d="M10.8 17.1 Q18.3 21.6 25.8 17.1"/><path d="M7 6.4 Q4 8.4 1.6 10.4 Q4 12.4 7 14.6"/><path d="M29.4 6.4 Q32.4 8.4 34.9 10.4 Q32.4 12.4 29.4 14.6"/><path d="M11.5 10.4 H16 M20 10.4 H24.2 M17.9 7.5 V9 M17.9 12 V13.5" stroke-width="1.7"/></g><g fill="#2a4aa0"><path d="M17.9 4.6 L14.4 8 H21.4Z"/><path d="M17.9 16.2 L14.4 12.8 H21.4Z"/><path d="M8.2 10.4 L12 7.2 V13.6Z"/><path d="M27.6 10.4 L23.8 7.2 V13.6Z"/></g></svg>
<div style="position:absolute;left:311.60px;top:324.37px;font-family:'Liberation Sans',sans-serif;font-size:22px;line-height:1;font-weight:400;color:#2e2e30;letter-spacing:-1.011px;white-space:pre;">49.07 acres (21,000 sf)</div>
<svg style="position:absolute;left:252.50px;top:378.00px;" width="38.00" height="26.00" viewBox="0 0 38 26"><g stroke="#2a4aa0" stroke-width="2.3" stroke-linejoin="round" stroke-linecap="round"><path d="M18.9 1 L30 7.2 L18.9 13.2 L7.8 7.2 Z" fill="#b9d0fa"/><path d="M7.8 7.2 V15.6 L18.9 21 V13.2 M30 7.2 V15.6 L18.9 21" fill="none"/><path d="M6.6 11 Q3.5 13 1.8 15.3 Q4.5 18 8.7 19.8 M31.2 11 Q34.3 13 36.1 15.3 Q33.4 18 29 19.8 M11.5 21.6 Q18.9 26 26.4 21.6" fill="none" stroke-width="2.5"/></g></svg>
<div style="position:absolute;left:311.60px;top:381.37px;font-family:'Liberation Sans',sans-serif;font-size:22px;line-height:1;font-weight:400;color:#2e2e30;letter-spacing:-1.218px;white-space:pre;">C-2</div>
<div style="position:absolute;left:231.00px;top:431.50px;width:518.00px;height:1.50px;background:#e3e4ea;"></div>
<svg style="position:absolute;left:256.40px;top:461.40px;" width="24.50" height="24.50" viewBox="0 0 24.5 24.5"><rect width="24.5" height="24.5" fill="#c62f3e"/><g fill="none" stroke="#fff" stroke-width="1.2"><path d="M12.2 12.2 Q4 13 2.5 2.5 Q13 4 12.2 12.2Z"/><path d="M12.2 12.2 Q20.5 13 22 2.5 Q11.5 4 12.2 12.2Z"/><path d="M12.2 12.2 Q4 11.5 2.5 22 Q13 20.5 12.2 12.2Z"/><path d="M12.2 12.2 Q20.5 11.5 22 22 Q11.5 20.5 12.2 12.2Z"/></g></svg>
<div style="position:absolute;left:284.70px;top:454.91px;font-family:'Liberation Serif',serif;font-size:37px;line-height:1;font-weight:700;color:#4a4a4e;letter-spacing:0.000px;white-space:pre;transform:scaleX(0.9876);transform-origin:0 0;">Hilton</div>
<div style="position:absolute;left:256.00px;top:485.38px;font-family:'Liberation Serif',serif;font-size:24.5px;line-height:1;font-weight:700;color:#4a4a4e;letter-spacing:0.000px;white-space:pre;transform:scaleX(1.0388);transform-origin:0 0;">Garden Inn</div>
<svg style="position:absolute;left:623.7px;top:461.3px;" width="46" height="46" viewBox="0 0 46 46"><defs><clipPath id="av"><circle cx="23" cy="23" r="23"/></clipPath><radialGradient id="avbg" cx="0.35" cy="0.35" r="0.8"><stop offset="0" stop-color="#4a5254"/><stop offset="0.6" stop-color="#2c3234"/><stop offset="1" stop-color="#1b1f22"/></radialGradient></defs><g clip-path="url(#av)"><rect width="46" height="46" fill="url(#avbg)"/><path d="M0 48 Q4 35 16 31 L23 34 L31 31 Q44 35 48 48Z" fill="#eef1f6"/><path d="M18.5 28 L28 28 L29 34 Q23.5 37 18 34Z" fill="#c99a80"/><ellipse cx="23.5" cy="19.5" rx="7" ry="8.8" fill="#d6a68a"/><path d="M15.5 18 Q14.5 7.5 23.5 7.8 Q32 7.5 31.5 18 Q30 11.5 23.5 12 Q17 11.5 15.5 18Z" fill="#8a8580"/><path d="M16.8 22 Q23.5 33 30.2 22 Q29.5 29.5 23.5 29.8 Q17.5 29.5 16.8 22Z" fill="#d9d6d0"/><path d="M20 25 Q23.5 27 27 25" stroke="#f3efe8" stroke-width="1.2" fill="none"/></g></svg>
<svg style="position:absolute;left:704.70px;top:475.00px;" width="12.00" height="18.50" viewBox="0 0 12 18.5"><path d="M2 2 L9 9.25 L2 16.5" stroke="#3a3a45" stroke-width="2.8" fill="none" stroke-linecap="butt"/></svg>
<div style="position:absolute;left:231.00px;top:532.00px;width:520.00px;height:1.50px;background:#e3e4ea;"></div>
<div style="position:absolute;left:253.00px;top:568.50px;width:46.00px;height:45.20px;background:#dfe1ea;border:1.5px solid #c8cbd9;box-sizing:border-box;border-radius:10px;"></div>
<svg style="position:absolute;left:263.00px;top:578.00px;" width="26.00" height="26.00" viewBox="0 0 26 26"><g stroke="#3a3c46" stroke-width="2.4"><path d="M2 6 H9 M14 6 H24 M11.5 2 V10"/><path d="M2 13 H5 M10 13 H24 M7.5 9 V17"/><path d="M2 20 H14 M19 20 H24 M16.5 16 V24"/></g></svg>
<div style="position:absolute;left:306.00px;top:568.50px;width:105.70px;height:45.20px;background:#fff;border:1.5px solid #c8cbd9;box-sizing:border-box;border-radius:10px;"></div>
<div style="position:absolute;left:418.50px;top:568.50px;width:194.20px;height:45.20px;background:#fff;border:1.5px solid #c8cbd9;box-sizing:border-box;border-radius:10px;"></div>
<div style="position:absolute;left:619.60px;top:568.50px;width:120.40px;height:45.20px;background:#fff;border:1.5px solid #c8cbd9;box-sizing:border-box;border-radius:10px;"></div>
<div style="position:absolute;left:329.00px;top:580.60px;font-family:'Liberation Sans',sans-serif;font-size:21.5px;line-height:1;font-weight:400;color:#333;letter-spacing:-0.866px;white-space:pre;">Site</div>
<svg style="position:absolute;left:382.30px;top:588.50px;" width="11.00" height="6.00" viewBox="0 0 11 6"><path d="M0 0 L11 0 L5.5 6 Z" fill="#3a3a3a"/></svg>
<div style="position:absolute;left:442.80px;top:580.60px;font-family:'Liberation Sans',sans-serif;font-size:21.5px;line-height:1;font-weight:400;color:#333;letter-spacing:-0.431px;white-space:pre;">Prototypes Only</div>
<div style="position:absolute;left:643.60px;top:580.60px;font-family:'Liberation Sans',sans-serif;font-size:21.5px;line-height:1;font-weight:400;color:#333;letter-spacing:-0.350px;white-space:pre;">Program</div>
<div style="position:absolute;left:704.00px;top:566.00px;width:47.00px;height:50.00px;background:linear-gradient(90deg,rgba(255,255,255,0),#fff 40%);"></div>
<div style="position:absolute;left:705.00px;top:568.00px;width:45.00px;height:45.50px;background:#fff;border-radius:50%;box-shadow:0 1px 4px rgba(0,0,0,0.13);"></div>
<svg style="position:absolute;left:722.50px;top:585.00px;" width="9.50" height="13.00" viewBox="0 0 9.5 13"><path d="M2 2 L6.5 6.5 L2 11" stroke="#333" stroke-width="2.2" fill="none" stroke-linecap="butt"/></svg>
<div style="position:absolute;left:254.00px;top:660.21px;font-family:'Liberation Sans',sans-serif;font-size:24.2px;line-height:1;font-weight:700;color:#2d3258;letter-spacing:-1.250px;white-space:pre;">32 Variants</div>
<div style="position:absolute;left:548.00px;top:662.50px;font-family:'Liberation Sans',sans-serif;font-size:21.5px;line-height:1;font-weight:400;color:#2a2a2a;letter-spacing:-0.933px;white-space:pre;"><span style="color:#2a2a2a">Ranked by </span><span style="color:#474a5a">Yield</span></div>
<svg style="position:absolute;left:709.00px;top:670.40px;" width="11.00" height="5.60" viewBox="0 0 11 5.6"><path d="M0 0 L11 0 L5.5 5.6 Z" fill="#3a3a3a"/></svg>
<div style="position:absolute;left:231.00px;top:707.00px;width:520.00px;height:1.50px;background:#cdd0de;"></div>
<div style="position:absolute;left:231.00px;top:707.50px;width:511.00px;height:247.50px;background:#ffffff;"></div>
<div style="position:absolute;left:231.00px;top:707.50px;width:5.00px;height:247.50px;background:#2f6fdf;"></div>
<div style="position:absolute;left:253.80px;top:731.22px;font-family:'Liberation Sans',sans-serif;font-size:21px;line-height:1;font-weight:400;color:#3c3c3c;letter-spacing:-0.565px;white-space:pre;">#AC732</div>
<svg style="position:absolute;left:344.00px;top:728.50px;" width="26.00" height="25.00" viewBox="0 0 26 25"><path d="M13 1.8 L16.2 9.2 L24.2 9.9 L18.1 15.2 L19.9 23 L13 18.9 L6.1 23 L7.9 15.2 L1.8 9.9 L9.8 9.2 Z" fill="#2f6ed8" stroke="#2f6ed8" stroke-width="1.6" stroke-linejoin="round"/></svg>
<svg style="position:absolute;left:260.50px;top:774.00px;" width="20.00" height="18.00" viewBox="0 0 20 18"><path d="M2.2 16.5 V4.5 L9.5 1.5 V16.5" fill="none" stroke="#2e3558" stroke-width="2"/><path d="M9.5 6 L16 7.5 V16.5 H9.5 Z" fill="#2e3558"/><path d="M0.5 16.7 H19.5" stroke="#2e3558" stroke-width="2.2"/></svg>
<svg style="position:absolute;left:262.50px;top:806.50px;" width="16.00" height="21.00" viewBox="0 0 16 21"><path d="M4.5 2.5 Q8 -0.5 11.5 2.5 L15 6.5 V18.5 Q15 20.5 13 20.5 H3 Q1 20.5 1 18.5 V6.5 Z" fill="#2e3558"/><circle cx="8" cy="4.5" r="1.3" fill="#fff"/><path d="M10.6 9.6 Q10 8.2 8 8.2 Q5.4 8.2 5.4 10.2 Q5.4 11.9 8 12.3 Q10.7 12.7 10.7 14.5 Q10.7 16.5 8 16.5 Q5.9 16.5 5.2 15" fill="none" stroke="#fff" stroke-width="1.5"/><path d="M8 6.8 V8.2 M8 16.5 V18" stroke="#fff" stroke-width="1.5"/></svg>
<svg style="position:absolute;left:260.50px;top:843.50px;" width="20.00" height="16.00" viewBox="0 0 20 16"><rect x="0.5" y="0.5" width="19" height="15" rx="1" fill="#2e3558"/><path d="M4 10.5 L7.5 7.5 L10 9.5 L14.5 5.5" fill="none" stroke="#fff" stroke-width="1.8"/><path d="M12 4.2 H15.8 V8" fill="none" stroke="#fff" stroke-width="1.6"/></svg>
<div style="position:absolute;left:300.50px;top:771.94px;font-family:'Liberation Sans',sans-serif;font-size:20.5px;line-height:1;font-weight:400;color:#2a2a2a;letter-spacing:-0.545px;white-space:pre;"><span style="color:#222">122 </span><span style="color:#4a4a4a">keys</span></div>
<div style="position:absolute;left:447.00px;top:771.94px;font-family:'Liberation Sans',sans-serif;font-size:20.5px;line-height:1;font-weight:400;color:#2a2a2a;letter-spacing:-0.258px;white-space:pre;">6 Floors</div>
<div style="position:absolute;left:300.50px;top:806.64px;font-family:'Liberation Sans',sans-serif;font-size:20.5px;line-height:1;font-weight:400;color:#222;letter-spacing:-0.077px;white-space:pre;">19.6M</div>
<div style="position:absolute;left:429.50px;top:806.64px;font-family:'Liberation Sans',sans-serif;font-size:20.5px;line-height:1;font-weight:400;color:#4a6590;letter-spacing:0.194px;white-space:pre;">161k /key</div>
<div style="position:absolute;left:300.50px;top:841.34px;font-family:'Liberation Sans',sans-serif;font-size:20.5px;line-height:1;font-weight:400;color:#2a2a2a;letter-spacing:-0.459px;white-space:pre;"><span style="color:#222">8.5% </span><span style="color:#4a4a4a">yield</span></div>
<div style="position:absolute;left:468.00px;top:841.34px;font-family:'Liberation Sans',sans-serif;font-size:20.5px;line-height:1;font-weight:400;color:#4a6590;letter-spacing:0.169px;white-space:pre;">0.92x</div>
<div style="position:absolute;left:542.80px;top:724.20px;width:185.20px;height:138.30px;background:#dddfe6;border-radius:12px;"></div>
<svg style="position:absolute;left:542.80px;top:724.20px;" width="185.00" height="138.00" viewBox="0 0 185 138"><path d="M1.5 80 L24 84 L96.4 101 L160.2 112.5 L160.5 115.5 L96 104 L24 87 L1 82.5 Z" fill="#7fb27a"/><path d="M160 114 L185 97.5 L185 100 L162 116Z" fill="#8cbf86"/><path d="M144 120 L159 117 L160 124 L146 124Z" fill="#7fb27a"/><path d="M5 84 L40 92 L70 100 L62 102 L5 88Z" fill="#e9eaee" opacity="0.5"/><path d="M7.9 54 L24.2 51.7 L24.2 83.8 L8.4 80.1 Z" fill="#f1f2f4"/><path d="M7 53 L24.2 50.5 L24.2 52.5 L7.9 54.5Z" fill="#6e7074"/><path d="M24.2 51.7 L104.3 55.4 L104.3 60 L96.4 60 L96.4 100.5 L24.2 83.8 Z" fill="#5e6064"/><path d="M24.2 50.3 L104.3 54 L104.3 56 L24.2 52.3Z" fill="#77797d"/><path d="M50 88 L72 94 L72 87 L50 81.5Z" fill="#e8e9ea"/><path d="M51.5 88 L70.5 93 L70.5 88 L51.5 83Z" fill="#4e5155"/><path d="M96.4 59.5 L168.5 63 L170 64 L168.5 66.6 L96.4 62.8 Z" fill="#77797d"/><path d="M96.4 62.8 L160.2 66.2 L160.2 112.2 L96.4 101 Z" fill="#f3f4f6"/><path d="M96.4 96 L160.2 106.5 L160.2 112.2 L96.4 101Z" fill="#e6e7ea"/><path d="M160.2 66.2 L168.5 66.6 L168.5 102 L160.2 112.2Z" fill="#e2e3e6"/><rect x="27.0" y="58.9" width="2.3" height="3" fill="#3fb5c2"/><rect x="27.0" y="63.4" width="2.3" height="3" fill="#3fb5c2"/><rect x="27.0" y="67.9" width="2.3" height="3" fill="#3fb5c2"/><rect x="27.0" y="72.4" width="2.3" height="3" fill="#3fb5c2"/><rect x="27.0" y="76.9" width="2.3" height="3" fill="#3fb5c2"/><rect x="33.6" y="59.2" width="2.3" height="3" fill="#3fb5c2"/><rect x="33.6" y="64.0" width="2.3" height="3" fill="#3fb5c2"/><rect x="33.6" y="68.7" width="2.3" height="3" fill="#3fb5c2"/><rect x="33.6" y="73.5" width="2.3" height="3" fill="#3fb5c2"/><rect x="33.6" y="78.2" width="2.3" height="3" fill="#3fb5c2"/><rect x="40.2" y="59.6" width="2.3" height="3" fill="#3fb5c2"/><rect x="40.2" y="64.6" width="2.3" height="3" fill="#3fb5c2"/><rect x="40.2" y="69.6" width="2.3" height="3" fill="#3fb5c2"/><rect x="40.2" y="74.5" width="2.3" height="3" fill="#3fb5c2"/><rect x="40.2" y="79.5" width="2.3" height="3" fill="#3fb5c2"/><rect x="46.8" y="60.0" width="2.3" height="3" fill="#3fb5c2"/><rect x="46.8" y="65.2" width="2.3" height="3" fill="#3fb5c2"/><rect x="46.8" y="70.4" width="2.3" height="3" fill="#3fb5c2"/><rect x="46.8" y="75.6" width="2.3" height="3" fill="#3fb5c2"/><rect x="46.8" y="80.8" width="2.3" height="3" fill="#3fb5c2"/><rect x="53.4" y="60.3" width="2.3" height="3" fill="#3fb5c2"/><rect x="53.4" y="65.8" width="2.3" height="3" fill="#3fb5c2"/><rect x="53.4" y="71.2" width="2.3" height="3" fill="#3fb5c2"/><rect x="53.4" y="76.7" width="2.3" height="3" fill="#3fb5c2"/><rect x="53.4" y="82.1" width="2.3" height="3" fill="#3fb5c2"/><rect x="60.0" y="60.7" width="2.3" height="3" fill="#3fb5c2"/><rect x="60.0" y="66.4" width="2.3" height="3" fill="#3fb5c2"/><rect x="60.0" y="72.0" width="2.3" height="3" fill="#3fb5c2"/><rect x="60.0" y="77.7" width="2.3" height="3" fill="#3fb5c2"/><rect x="60.0" y="83.4" width="2.3" height="3" fill="#3fb5c2"/><rect x="66.6" y="61.0" width="2.3" height="3" fill="#3fb5c2"/><rect x="66.6" y="67.0" width="2.3" height="3" fill="#3fb5c2"/><rect x="66.6" y="72.9" width="2.3" height="3" fill="#3fb5c2"/><rect x="66.6" y="78.8" width="2.3" height="3" fill="#3fb5c2"/><rect x="66.6" y="84.7" width="2.3" height="3" fill="#3fb5c2"/><rect x="73.2" y="61.4" width="2.3" height="3" fill="#3fb5c2"/><rect x="73.2" y="67.6" width="2.3" height="3" fill="#3fb5c2"/><rect x="73.2" y="73.7" width="2.3" height="3" fill="#3fb5c2"/><rect x="73.2" y="79.8" width="2.3" height="3" fill="#3fb5c2"/><rect x="73.2" y="86.0" width="2.3" height="3" fill="#3fb5c2"/><rect x="79.8" y="61.8" width="2.3" height="3" fill="#3fb5c2"/><rect x="79.8" y="68.2" width="2.3" height="3" fill="#3fb5c2"/><rect x="79.8" y="74.5" width="2.3" height="3" fill="#3fb5c2"/><rect x="79.8" y="80.9" width="2.3" height="3" fill="#3fb5c2"/><rect x="79.8" y="87.3" width="2.3" height="3" fill="#3fb5c2"/><rect x="86.4" y="62.1" width="2.3" height="3" fill="#3fb5c2"/><rect x="86.4" y="68.8" width="2.3" height="3" fill="#3fb5c2"/><rect x="86.4" y="75.4" width="2.3" height="3" fill="#3fb5c2"/><rect x="86.4" y="82.0" width="2.3" height="3" fill="#3fb5c2"/><rect x="86.4" y="88.6" width="2.3" height="3" fill="#3fb5c2"/><rect x="99.6" y="69.0" width="3.6" height="4.6" fill="#3aa7b6"/><rect x="99.6" y="75.1" width="3.6" height="4.6" fill="#3aa7b6"/><rect x="99.6" y="81.2" width="3.6" height="4.6" fill="#3aa7b6"/><rect x="99.6" y="87.3" width="3.6" height="4.6" fill="#3aa7b6"/><rect x="99.6" y="93.4" width="3.6" height="4.6" fill="#3aa7b6"/><rect x="109.8" y="69.5" width="3.6" height="4.6" fill="#3aa7b6"/><rect x="109.8" y="75.8" width="3.6" height="4.6" fill="#3aa7b6"/><rect x="109.8" y="82.1" width="3.6" height="4.6" fill="#3aa7b6"/><rect x="109.8" y="88.5" width="3.6" height="4.6" fill="#3aa7b6"/><rect x="109.8" y="94.8" width="3.6" height="4.6" fill="#3aa7b6"/><rect x="120.0" y="70.0" width="3.6" height="4.6" fill="#3aa7b6"/><rect x="120.0" y="76.6" width="3.6" height="4.6" fill="#3aa7b6"/><rect x="120.0" y="83.1" width="3.6" height="4.6" fill="#3aa7b6"/><rect x="120.0" y="89.6" width="3.6" height="4.6" fill="#3aa7b6"/><rect x="120.0" y="96.1" width="3.6" height="4.6" fill="#3aa7b6"/><rect x="130.2" y="70.6" width="3.6" height="4.6" fill="#3aa7b6"/><rect x="130.2" y="77.3" width="3.6" height="4.6" fill="#3aa7b6"/><rect x="130.2" y="84.1" width="3.6" height="4.6" fill="#3aa7b6"/><rect x="130.2" y="90.8" width="3.6" height="4.6" fill="#3aa7b6"/><rect x="130.2" y="97.5" width="3.6" height="4.6" fill="#3aa7b6"/><rect x="140.4" y="71.1" width="3.6" height="4.6" fill="#3aa7b6"/><rect x="140.4" y="78.1" width="3.6" height="4.6" fill="#3aa7b6"/><rect x="140.4" y="85.0" width="3.6" height="4.6" fill="#3aa7b6"/><rect x="140.4" y="92.0" width="3.6" height="4.6" fill="#3aa7b6"/><rect x="140.4" y="98.9" width="3.6" height="4.6" fill="#3aa7b6"/><rect x="150.6" y="71.7" width="3.6" height="4.6" fill="#3aa7b6"/><rect x="150.6" y="78.8" width="3.6" height="4.6" fill="#3aa7b6"/><rect x="150.6" y="86.0" width="3.6" height="4.6" fill="#3aa7b6"/><rect x="150.6" y="93.1" width="3.6" height="4.6" fill="#3aa7b6"/><rect x="150.6" y="100.3" width="3.6" height="4.6" fill="#3aa7b6"/><rect x="10.0" y="57.0" width="2" height="3.4" fill="#3aa9b8"/><rect x="10.0" y="63.2" width="2" height="3.4" fill="#3aa9b8"/><rect x="10.0" y="69.4" width="2" height="3.4" fill="#3aa9b8"/><rect x="10.0" y="75.6" width="2" height="3.4" fill="#3aa9b8"/><rect x="14.8" y="57.3" width="2" height="3.4" fill="#3aa9b8"/><rect x="14.8" y="63.5" width="2" height="3.4" fill="#3aa9b8"/><rect x="14.8" y="69.7" width="2" height="3.4" fill="#3aa9b8"/><rect x="14.8" y="75.9" width="2" height="3.4" fill="#3aa9b8"/><rect x="19.6" y="57.6" width="2" height="3.4" fill="#3aa9b8"/><rect x="19.6" y="63.8" width="2" height="3.4" fill="#3aa9b8"/><rect x="19.6" y="70.0" width="2" height="3.4" fill="#3aa9b8"/><rect x="19.6" y="76.2" width="2" height="3.4" fill="#3aa9b8"/></svg>
<div style="position:absolute;left:617.70px;top:735.80px;width:98.30px;height:34.90px;background:#fff;border-radius:9px;"></div>
<div style="position:absolute;left:640.90px;top:742.33px;font-family:'Liberation Sans',sans-serif;font-size:23px;line-height:1;font-weight:400;color:#2b4c9b;letter-spacing:-0.734px;white-space:pre;">8.5%</div>
<div style="position:absolute;left:253.00px;top:881.00px;width:128.40px;height:25.80px;background:#bfd7f8;border-radius:13px;"></div>
<svg style="position:absolute;left:265.50px;top:883.50px;" width="21.00" height="21.00" viewBox="0 0 21 21"><path d="M10.5 1.5 L13 3.3 L16.1 3.1 L16.9 6.1 L19.5 7.9 L18.4 10.8 L19.5 13.7 L16.9 15.5 L16.1 18.5 L13 18.3 L10.5 20.1 L8 18.3 L4.9 18.5 L4.1 15.5 L1.5 13.7 L2.6 10.8 L1.5 7.9 L4.1 6.1 L4.9 3.1 L8 3.3 Z" fill="none" stroke="#2a5bc4" stroke-width="1.9" stroke-linejoin="round"/><path d="M6.8 10.8 L9.5 13.4 L14.3 8.5" fill="none" stroke="#2a5bc4" stroke-width="1.9"/></svg>
<div style="position:absolute;left:294.40px;top:885.76px;font-family:'Liberation Sans',sans-serif;font-size:18px;line-height:1;font-weight:400;color:#404a5c;letter-spacing:-0.250px;white-space:pre;">Prototype</div>
<div style="position:absolute;left:388.00px;top:881.00px;width:226.00px;height:25.80px;background:#e5e6ec;border-radius:13px;"></div>
<div style="position:absolute;left:399.80px;top:885.76px;font-family:'Liberation Sans',sans-serif;font-size:18px;line-height:1;font-weight:400;color:#474b58;letter-spacing:-0.425px;white-space:pre;">Center-Loaded Front Entry</div>
<div style="position:absolute;left:253.00px;top:913.50px;width:183.40px;height:24.50px;background:#e5e6ec;border-radius:13px;"></div>
<div style="position:absolute;left:265.30px;top:917.76px;font-family:'Liberation Sans',sans-serif;font-size:18px;line-height:1;font-weight:400;color:#474b58;letter-spacing:-0.477px;white-space:pre;">Bar &amp; Meeting Room</div>
<div style="position:absolute;left:443.00px;top:913.50px;width:84.00px;height:24.50px;background:#e5e6ec;border-radius:13px;"></div>
<div style="position:absolute;left:454.70px;top:917.76px;font-family:'Liberation Sans',sans-serif;font-size:18px;line-height:1;font-weight:400;color:#474b58;letter-spacing:-0.464px;white-space:pre;">No Pool</div>
<div style="position:absolute;left:231.00px;top:954.00px;width:511.00px;height:1.50px;background:#cdd0de;"></div>
<div style="position:absolute;left:231.00px;top:955.50px;width:511.00px;height:247.50px;background:#f8f8fd;"></div>
<div style="position:absolute;left:253.80px;top:979.22px;font-family:'Liberation Sans',sans-serif;font-size:21px;line-height:1;font-weight:400;color:#3c3c3c;letter-spacing:-0.565px;white-space:pre;">#AC732</div>
<svg style="position:absolute;left:344.00px;top:976.50px;" width="26.00" height="25.00" viewBox="0 0 26 25"><path d="M13 1.8 L16.2 9.2 L24.2 9.9 L18.1 15.2 L19.9 23 L13 18.9 L6.1 23 L7.9 15.2 L1.8 9.9 L9.8 9.2 Z" fill="#2f6ed8" stroke="#2f6ed8" stroke-width="1.6" stroke-linejoin="round"/></svg>
<svg style="position:absolute;left:260.50px;top:1022.00px;" width="20.00" height="18.00" viewBox="0 0 20 18"><path d="M2.2 16.5 V4.5 L9.5 1.5 V16.5" fill="none" stroke="#2e3558" stroke-width="2"/><path d="M9.5 6 L16 7.5 V16.5 H9.5 Z" fill="#2e3558"/><path d="M0.5 16.7 H19.5" stroke="#2e3558" stroke-width="2.2"/></svg>
<svg style="position:absolute;left:262.50px;top:1054.50px;" width="16.00" height="21.00" viewBox="0 0 16 21"><path d="M4.5 2.5 Q8 -0.5 11.5 2.5 L15 6.5 V18.5 Q15 20.5 13 20.5 H3 Q1 20.5 1 18.5 V6.5 Z" fill="#2e3558"/><circle cx="8" cy="4.5" r="1.3" fill="#fff"/><path d="M10.6 9.6 Q10 8.2 8 8.2 Q5.4 8.2 5.4 10.2 Q5.4 11.9 8 12.3 Q10.7 12.7 10.7 14.5 Q10.7 16.5 8 16.5 Q5.9 16.5 5.2 15" fill="none" stroke="#fff" stroke-width="1.5"/><path d="M8 6.8 V8.2 M8 16.5 V18" stroke="#fff" stroke-width="1.5"/></svg>
<svg style="position:absolute;left:260.50px;top:1091.50px;" width="20.00" height="16.00" viewBox="0 0 20 16"><rect x="0.5" y="0.5" width="19" height="15" rx="1" fill="#2e3558"/><path d="M4 10.5 L7.5 7.5 L10 9.5 L14.5 5.5" fill="none" stroke="#fff" stroke-width="1.8"/><path d="M12 4.2 H15.8 V8" fill="none" stroke="#fff" stroke-width="1.6"/></svg>
<div style="position:absolute;left:300.50px;top:1019.94px;font-family:'Liberation Sans',sans-serif;font-size:20.5px;line-height:1;font-weight:400;color:#2a2a2a;letter-spacing:-0.545px;white-space:pre;"><span style="color:#222">122 </span><span style="color:#4a4a4a">keys</span></div>
<div style="position:absolute;left:447.00px;top:1019.94px;font-family:'Liberation Sans',sans-serif;font-size:20.5px;line-height:1;font-weight:400;color:#2a2a2a;letter-spacing:-0.258px;white-space:pre;">6 Floors</div>
<div style="position:absolute;left:300.50px;top:1054.64px;font-family:'Liberation Sans',sans-serif;font-size:20.5px;line-height:1;font-weight:400;color:#222;letter-spacing:-0.077px;white-space:pre;">19.6M</div>
<div style="position:absolute;left:429.50px;top:1054.64px;font-family:'Liberation Sans',sans-serif;font-size:20.5px;line-height:1;font-weight:400;color:#4a6590;letter-spacing:0.194px;white-space:pre;">161k /key</div>
<div style="position:absolute;left:300.50px;top:1089.34px;font-family:'Liberation Sans',sans-serif;font-size:20.5px;line-height:1;font-weight:400;color:#2a2a2a;letter-spacing:-0.459px;white-space:pre;"><span style="color:#222">8.5% </span><span style="color:#4a4a4a">yield</span></div>
<div style="position:absolute;left:468.00px;top:1089.34px;font-family:'Liberation Sans',sans-serif;font-size:20.5px;line-height:1;font-weight:400;color:#4a6590;letter-spacing:0.169px;white-space:pre;">0.92x</div>
<div style="position:absolute;left:542.80px;top:972.20px;width:185.20px;height:138.30px;background:#dddfe6;border-radius:12px;"></div>
<svg style="position:absolute;left:542.80px;top:972.20px;" width="185.00" height="138.00" viewBox="0 0 185 138"><path d="M1.5 80 L24 84 L96.4 101 L160.2 112.5 L160.5 115.5 L96 104 L24 87 L1 82.5 Z" fill="#7fb27a"/><path d="M160 114 L185 97.5 L185 100 L162 116Z" fill="#8cbf86"/><path d="M144 120 L159 117 L160 124 L146 124Z" fill="#7fb27a"/><path d="M5 84 L40 92 L70 100 L62 102 L5 88Z" fill="#e9eaee" opacity="0.5"/><path d="M7.9 54 L24.2 51.7 L24.2 83.8 L8.4 80.1 Z" fill="#f1f2f4"/><path d="M7 53 L24.2 50.5 L24.2 52.5 L7.9 54.5Z" fill="#6e7074"/><path d="M24.2 51.7 L104.3 55.4 L104.3 60 L96.4 60 L96.4 100.5 L24.2 83.8 Z" fill="#5e6064"/><path d="M24.2 50.3 L104.3 54 L104.3 56 L24.2 52.3Z" fill="#77797d"/><path d="M50 88 L72 94 L72 87 L50 81.5Z" fill="#e8e9ea"/><path d="M51.5 88 L70.5 93 L70.5 88 L51.5 83Z" fill="#4e5155"/><path d="M96.4 59.5 L168.5 63 L170 64 L168.5 66.6 L96.4 62.8 Z" fill="#77797d"/><path d="M96.4 62.8 L160.2 66.2 L160.2 112.2 L96.4 101 Z" fill="#f3f4f6"/><path d="M96.4 96 L160.2 106.5 L160.2 112.2 L96.4 101Z" fill="#e6e7ea"/><path d="M160.2 66.2 L168.5 66.6 L168.5 102 L160.2 112.2Z" fill="#e2e3e6"/><rect x="27.0" y="58.9" width="2.3" height="3" fill="#3fb5c2"/><rect x="27.0" y="63.4" width="2.3" height="3" fill="#3fb5c2"/><rect x="27.0" y="67.9" width="2.3" height="3" fill="#3fb5c2"/><rect x="27.0" y="72.4" width="2.3" height="3" fill="#3fb5c2"/><rect x="27.0" y="76.9" width="2.3" height="3" fill="#3fb5c2"/><rect x="33.6" y="59.2" width="2.3" height="3" fill="#3fb5c2"/><rect x="33.6" y="64.0" width="2.3" height="3" fill="#3fb5c2"/><rect x="33.6" y="68.7" width="2.3" height="3" fill="#3fb5c2"/><rect x="33.6" y="73.5" width="2.3" height="3" fill="#3fb5c2"/><rect x="33.6" y="78.2" width="2.3" height="3" fill="#3fb5c2"/><rect x="40.2" y="59.6" width="2.3" height="3" fill="#3fb5c2"/><rect x="40.2" y="64.6" width="2.3" height="3" fill="#3fb5c2"/><rect x="40.2" y="69.6" width="2.3" height="3" fill="#3fb5c2"/><rect x="40.2" y="74.5" width="2.3" height="3" fill="#3fb5c2"/><rect x="40.2" y="79.5" width="2.3" height="3" fill="#3fb5c2"/><rect x="46.8" y="60.0" width="2.3" height="3" fill="#3fb5c2"/><rect x="46.8" y="65.2" width="2.3" height="3" fill="#3fb5c2"/><rect x="46.8" y="70.4" width="2.3" height="3" fill="#3fb5c2"/><rect x="46.8" y="75.6" width="2.3" height="3" fill="#3fb5c2"/><rect x="46.8" y="80.8" width="2.3" height="3" fill="#3fb5c2"/><rect x="53.4" y="60.3" width="2.3" height="3" fill="#3fb5c2"/><rect x="53.4" y="65.8" width="2.3" height="3" fill="#3fb5c2"/><rect x="53.4" y="71.2" width="2.3" height="3" fill="#3fb5c2"/><rect x="53.4" y="76.7" width="2.3" height="3" fill="#3fb5c2"/><rect x="53.4" y="82.1" width="2.3" height="3" fill="#3fb5c2"/><rect x="60.0" y="60.7" width="2.3" height="3" fill="#3fb5c2"/><rect x="60.0" y="66.4" width="2.3" height="3" fill="#3fb5c2"/><rect x="60.0" y="72.0" width="2.3" height="3" fill="#3fb5c2"/><rect x="60.0" y="77.7" width="2.3" height="3" fill="#3fb5c2"/><rect x="60.0" y="83.4" width="2.3" height="3" fill="#3fb5c2"/><rect x="66.6" y="61.0" width="2.3" height="3" fill="#3fb5c2"/><rect x="66.6" y="67.0" width="2.3" height="3" fill="#3fb5c2"/><rect x="66.6" y="72.9" width="2.3" height="3" fill="#3fb5c2"/><rect x="66.6" y="78.8" width="2.3" height="3" fill="#3fb5c2"/><rect x="66.6" y="84.7" width="2.3" height="3" fill="#3fb5c2"/><rect x="73.2" y="61.4" width="2.3" height="3" fill="#3fb5c2"/><rect x="73.2" y="67.6" width="2.3" height="3" fill="#3fb5c2"/><rect x="73.2" y="73.7" width="2.3" height="3" fill="#3fb5c2"/><rect x="73.2" y="79.8" width="2.3" height="3" fill="#3fb5c2"/><rect x="73.2" y="86.0" width="2.3" height="3" fill="#3fb5c2"/><rect x="79.8" y="61.8" width="2.3" height="3" fill="#3fb5c2"/><rect x="79.8" y="68.2" width="2.3" height="3" fill="#3fb5c2"/><rect x="79.8" y="74.5" width="2.3" height="3" fill="#3fb5c2"/><rect x="79.8" y="80.9" width="2.3" height="3" fill="#3fb5c2"/><rect x="79.8" y="87.3" width="2.3" height="3" fill="#3fb5c2"/><rect x="86.4" y="62.1" width="2.3" height="3" fill="#3fb5c2"/><rect x="86.4" y="68.8" width="2.3" height="3" fill="#3fb5c2"/><rect x="86.4" y="75.4" width="2.3" height="3" fill="#3fb5c2"/><rect x="86.4" y="82.0" width="2.3" height="3" fill="#3fb5c2"/><rect x="86.4" y="88.6" width="2.3" height="3" fill="#3fb5c2"/><rect x="99.6" y="69.0" width="3.6" height="4.6" fill="#3aa7b6"/><rect x="99.6" y="75.1" width="3.6" height="4.6" fill="#3aa7b6"/><rect x="99.6" y="81.2" width="3.6" height="4.6" fill="#3aa7b6"/><rect x="99.6" y="87.3" width="3.6" height="4.6" fill="#3aa7b6"/><rect x="99.6" y="93.4" width="3.6" height="4.6" fill="#3aa7b6"/><rect x="109.8" y="69.5" width="3.6" height="4.6" fill="#3aa7b6"/><rect x="109.8" y="75.8" width="3.6" height="4.6" fill="#3aa7b6"/><rect x="109.8" y="82.1" width="3.6" height="4.6" fill="#3aa7b6"/><rect x="109.8" y="88.5" width="3.6" height="4.6" fill="#3aa7b6"/><rect x="109.8" y="94.8" width="3.6" height="4.6" fill="#3aa7b6"/><rect x="120.0" y="70.0" width="3.6" height="4.6" fill="#3aa7b6"/><rect x="120.0" y="76.6" width="3.6" height="4.6" fill="#3aa7b6"/><rect x="120.0" y="83.1" width="3.6" height="4.6" fill="#3aa7b6"/><rect x="120.0" y="89.6" width="3.6" height="4.6" fill="#3aa7b6"/><rect x="120.0" y="96.1" width="3.6" height="4.6" fill="#3aa7b6"/><rect x="130.2" y="70.6" width="3.6" height="4.6" fill="#3aa7b6"/><rect x="130.2" y="77.3" width="3.6" height="4.6" fill="#3aa7b6"/><rect x="130.2" y="84.1" width="3.6" height="4.6" fill="#3aa7b6"/><rect x="130.2" y="90.8" width="3.6" height="4.6" fill="#3aa7b6"/><rect x="130.2" y="97.5" width="3.6" height="4.6" fill="#3aa7b6"/><rect x="140.4" y="71.1" width="3.6" height="4.6" fill="#3aa7b6"/><rect x="140.4" y="78.1" width="3.6" height="4.6" fill="#3aa7b6"/><rect x="140.4" y="85.0" width="3.6" height="4.6" fill="#3aa7b6"/><rect x="140.4" y="92.0" width="3.6" height="4.6" fill="#3aa7b6"/><rect x="140.4" y="98.9" width="3.6" height="4.6" fill="#3aa7b6"/><rect x="150.6" y="71.7" width="3.6" height="4.6" fill="#3aa7b6"/><rect x="150.6" y="78.8" width="3.6" height="4.6" fill="#3aa7b6"/><rect x="150.6" y="86.0" width="3.6" height="4.6" fill="#3aa7b6"/><rect x="150.6" y="93.1" width="3.6" height="4.6" fill="#3aa7b6"/><rect x="150.6" y="100.3" width="3.6" height="4.6" fill="#3aa7b6"/><rect x="10.0" y="57.0" width="2" height="3.4" fill="#3aa9b8"/><rect x="10.0" y="63.2" width="2" height="3.4" fill="#3aa9b8"/><rect x="10.0" y="69.4" width="2" height="3.4" fill="#3aa9b8"/><rect x="10.0" y="75.6" width="2" height="3.4" fill="#3aa9b8"/><rect x="14.8" y="57.3" width="2" height="3.4" fill="#3aa9b8"/><rect x="14.8" y="63.5" width="2" height="3.4" fill="#3aa9b8"/><rect x="14.8" y="69.7" width="2" height="3.4" fill="#3aa9b8"/><rect x="14.8" y="75.9" width="2" height="3.4" fill="#3aa9b8"/><rect x="19.6" y="57.6" width="2" height="3.4" fill="#3aa9b8"/><rect x="19.6" y="63.8" width="2" height="3.4" fill="#3aa9b8"/><rect x="19.6" y="70.0" width="2" height="3.4" fill="#3aa9b8"/><rect x="19.6" y="76.2" width="2" height="3.4" fill="#3aa9b8"/></svg>
<div style="position:absolute;left:617.70px;top:983.80px;width:98.30px;height:34.90px;background:#fff;border-radius:9px;"></div>
<div style="position:absolute;left:640.90px;top:990.33px;font-family:'Liberation Sans',sans-serif;font-size:23px;line-height:1;font-weight:400;color:#2b4c9b;letter-spacing:-0.734px;white-space:pre;">8.5%</div>
<div style="position:absolute;left:253.00px;top:1129.00px;width:128.40px;height:25.80px;background:#bfd7f8;border-radius:13px;"></div>
<svg style="position:absolute;left:265.50px;top:1131.50px;" width="21.00" height="21.00" viewBox="0 0 21 21"><path d="M10.5 1.5 L13 3.3 L16.1 3.1 L16.9 6.1 L19.5 7.9 L18.4 10.8 L19.5 13.7 L16.9 15.5 L16.1 18.5 L13 18.3 L10.5 20.1 L8 18.3 L4.9 18.5 L4.1 15.5 L1.5 13.7 L2.6 10.8 L1.5 7.9 L4.1 6.1 L4.9 3.1 L8 3.3 Z" fill="none" stroke="#2a5bc4" stroke-width="1.9" stroke-linejoin="round"/><path d="M6.8 10.8 L9.5 13.4 L14.3 8.5" fill="none" stroke="#2a5bc4" stroke-width="1.9"/></svg>
<div style="position:absolute;left:294.40px;top:1133.76px;font-family:'Liberation Sans',sans-serif;font-size:18px;line-height:1;font-weight:400;color:#404a5c;letter-spacing:-0.250px;white-space:pre;">Prototype</div>
<div style="position:absolute;left:388.00px;top:1129.00px;width:226.00px;height:25.80px;background:#e5e6ec;border-radius:13px;"></div>
<div style="position:absolute;left:399.80px;top:1133.76px;font-family:'Liberation Sans',sans-serif;font-size:18px;line-height:1;font-weight:400;color:#474b58;letter-spacing:-0.425px;white-space:pre;">Center-Loaded Front Entry</div>
<div style="position:absolute;left:253.00px;top:1161.50px;width:183.40px;height:24.50px;background:#e5e6ec;border-radius:13px;"></div>
<div style="position:absolute;left:265.30px;top:1165.76px;font-family:'Liberation Sans',sans-serif;font-size:18px;line-height:1;font-weight:400;color:#474b58;letter-spacing:-0.477px;white-space:pre;">Bar &amp; Meeting Room</div>
<div style="position:absolute;left:443.00px;top:1161.50px;width:84.00px;height:24.50px;background:#e5e6ec;border-radius:13px;"></div>
<div style="position:absolute;left:454.70px;top:1165.76px;font-family:'Liberation Sans',sans-serif;font-size:18px;line-height:1;font-weight:400;color:#474b58;letter-spacing:-0.464px;white-space:pre;">No Pool</div>
<div style="position:absolute;left:231.00px;top:1202.00px;width:511.00px;height:10.00px;background:#dcdde5;"></div>
<div style="position:absolute;left:231.00px;top:1212.00px;width:511.00px;height:247.50px;background:#f8f8fd;"></div>
<div style="position:absolute;left:253.80px;top:1235.72px;font-family:'Liberation Sans',sans-serif;font-size:21px;line-height:1;font-weight:400;color:#3c3c3c;letter-spacing:-0.565px;white-space:pre;">#AC732</div>
<svg style="position:absolute;left:344.00px;top:1233.00px;" width="26.00" height="25.00" viewBox="0 0 26 25"><path d="M13 3 L15.7 9.7 L23 10.3 L17.4 15.1 L19.1 22.2 L13 18.4 L6.9 22.2 L8.6 15.1 L3 10.3 L10.3 9.7 Z" fill="none" stroke="#66666e" stroke-width="2.3" stroke-linejoin="round"/></svg>
<svg style="position:absolute;left:260.50px;top:1278.50px;" width="20.00" height="18.00" viewBox="0 0 20 18"><path d="M2.2 16.5 V4.5 L9.5 1.5 V16.5" fill="none" stroke="#2e3558" stroke-width="2"/><path d="M9.5 6 L16 7.5 V16.5 H9.5 Z" fill="#2e3558"/><path d="M0.5 16.7 H19.5" stroke="#2e3558" stroke-width="2.2"/></svg>
<svg style="position:absolute;left:262.50px;top:1311.00px;" width="16.00" height="21.00" viewBox="0 0 16 21"><path d="M4.5 2.5 Q8 -0.5 11.5 2.5 L15 6.5 V18.5 Q15 20.5 13 20.5 H3 Q1 20.5 1 18.5 V6.5 Z" fill="#2e3558"/><circle cx="8" cy="4.5" r="1.3" fill="#fff"/><path d="M10.6 9.6 Q10 8.2 8 8.2 Q5.4 8.2 5.4 10.2 Q5.4 11.9 8 12.3 Q10.7 12.7 10.7 14.5 Q10.7 16.5 8 16.5 Q5.9 16.5 5.2 15" fill="none" stroke="#fff" stroke-width="1.5"/><path d="M8 6.8 V8.2 M8 16.5 V18" stroke="#fff" stroke-width="1.5"/></svg>
<svg style="position:absolute;left:260.50px;top:1348.00px;" width="20.00" height="16.00" viewBox="0 0 20 16"><rect x="0.5" y="0.5" width="19" height="15" rx="1" fill="#2e3558"/><path d="M4 10.5 L7.5 7.5 L10 9.5 L14.5 5.5" fill="none" stroke="#fff" stroke-width="1.8"/><path d="M12 4.2 H15.8 V8" fill="none" stroke="#fff" stroke-width="1.6"/></svg>
<div style="position:absolute;left:300.50px;top:1276.44px;font-family:'Liberation Sans',sans-serif;font-size:20.5px;line-height:1;font-weight:400;color:#2a2a2a;letter-spacing:-0.545px;white-space:pre;"><span style="color:#222">122 </span><span style="color:#4a4a4a">keys</span></div>
<div style="position:absolute;left:447.00px;top:1276.44px;font-family:'Liberation Sans',sans-serif;font-size:20.5px;line-height:1;font-weight:400;color:#2a2a2a;letter-spacing:-0.258px;white-space:pre;">6 Floors</div>
<div style="position:absolute;left:300.50px;top:1311.14px;font-family:'Liberation Sans',sans-serif;font-size:20.5px;line-height:1;font-weight:400;color:#222;letter-spacing:-0.077px;white-space:pre;">19.6M</div>
<div style="position:absolute;left:429.50px;top:1311.14px;font-family:'Liberation Sans',sans-serif;font-size:20.5px;line-height:1;font-weight:400;color:#4a6590;letter-spacing:0.194px;white-space:pre;">161k /key</div>
<div style="position:absolute;left:300.50px;top:1345.84px;font-family:'Liberation Sans',sans-serif;font-size:20.5px;line-height:1;font-weight:400;color:#2a2a2a;letter-spacing:-0.459px;white-space:pre;"><span style="color:#222">8.5% </span><span style="color:#4a4a4a">yield</span></div>
<div style="position:absolute;left:468.00px;top:1345.84px;font-family:'Liberation Sans',sans-serif;font-size:20.5px;line-height:1;font-weight:400;color:#4a6590;letter-spacing:0.169px;white-space:pre;">0.92x</div>
<div style="position:absolute;left:542.80px;top:1228.70px;width:185.20px;height:138.30px;background:#dddfe6;border-radius:12px;"></div>
<svg style="position:absolute;left:542.80px;top:1228.70px;" width="185.00" height="138.00" viewBox="0 0 185 138"><path d="M1.5 80 L24 84 L96.4 101 L160.2 112.5 L160.5 115.5 L96 104 L24 87 L1 82.5 Z" fill="#7fb27a"/><path d="M160 114 L185 97.5 L185 100 L162 116Z" fill="#8cbf86"/><path d="M144 120 L159 117 L160 124 L146 124Z" fill="#7fb27a"/><path d="M5 84 L40 92 L70 100 L62 102 L5 88Z" fill="#e9eaee" opacity="0.5"/><path d="M7.9 54 L24.2 51.7 L24.2 83.8 L8.4 80.1 Z" fill="#f1f2f4"/><path d="M7 53 L24.2 50.5 L24.2 52.5 L7.9 54.5Z" fill="#6e7074"/><path d="M24.2 51.7 L104.3 55.4 L104.3 60 L96.4 60 L96.4 100.5 L24.2 83.8 Z" fill="#5e6064"/><path d="M24.2 50.3 L104.3 54 L104.3 56 L24.2 52.3Z" fill="#77797d"/><path d="M50 88 L72 94 L72 87 L50 81.5Z" fill="#e8e9ea"/><path d="M51.5 88 L70.5 93 L70.5 88 L51.5 83Z" fill="#4e5155"/><path d="M96.4 59.5 L168.5 63 L170 64 L168.5 66.6 L96.4 62.8 Z" fill="#77797d"/><path d="M96.4 62.8 L160.2 66.2 L160.2 112.2 L96.4 101 Z" fill="#f3f4f6"/><path d="M96.4 96 L160.2 106.5 L160.2 112.2 L96.4 101Z" fill="#e6e7ea"/><path d="M160.2 66.2 L168.5 66.6 L168.5 102 L160.2 112.2Z" fill="#e2e3e6"/><rect x="27.0" y="58.9" width="2.3" height="3" fill="#3fb5c2"/><rect x="27.0" y="63.4" width="2.3" height="3" fill="#3fb5c2"/><rect x="27.0" y="67.9" width="2.3" height="3" fill="#3fb5c2"/><rect x="27.0" y="72.4" width="2.3" height="3" fill="#3fb5c2"/><rect x="27.0" y="76.9" width="2.3" height="3" fill="#3fb5c2"/><rect x="33.6" y="59.2" width="2.3" height="3" fill="#3fb5c2"/><rect x="33.6" y="64.0" width="2.3" height="3" fill="#3fb5c2"/><rect x="33.6" y="68.7" width="2.3" height="3" fill="#3fb5c2"/><rect x="33.6" y="73.5" width="2.3" height="3" fill="#3fb5c2"/><rect x="33.6" y="78.2" width="2.3" height="3" fill="#3fb5c2"/><rect x="40.2" y="59.6" width="2.3" height="3" fill="#3fb5c2"/><rect x="40.2" y="64.6" width="2.3" height="3" fill="#3fb5c2"/><rect x="40.2" y="69.6" width="2.3" height="3" fill="#3fb5c2"/><rect x="40.2" y="74.5" width="2.3" height="3" fill="#3fb5c2"/><rect x="40.2" y="79.5" width="2.3" height="3" fill="#3fb5c2"/><rect x="46.8" y="60.0" width="2.3" height="3" fill="#3fb5c2"/><rect x="46.8" y="65.2" width="2.3" height="3" fill="#3fb5c2"/><rect x="46.8" y="70.4" width="2.3" height="3" fill="#3fb5c2"/><rect x="46.8" y="75.6" width="2.3" height="3" fill="#3fb5c2"/><rect x="46.8" y="80.8" width="2.3" height="3" fill="#3fb5c2"/><rect x="53.4" y="60.3" width="2.3" height="3" fill="#3fb5c2"/><rect x="53.4" y="65.8" width="2.3" height="3" fill="#3fb5c2"/><rect x="53.4" y="71.2" width="2.3" height="3" fill="#3fb5c2"/><rect x="53.4" y="76.7" width="2.3" height="3" fill="#3fb5c2"/><rect x="53.4" y="82.1" width="2.3" height="3" fill="#3fb5c2"/><rect x="60.0" y="60.7" width="2.3" height="3" fill="#3fb5c2"/><rect x="60.0" y="66.4" width="2.3" height="3" fill="#3fb5c2"/><rect x="60.0" y="72.0" width="2.3" height="3" fill="#3fb5c2"/><rect x="60.0" y="77.7" width="2.3" height="3" fill="#3fb5c2"/><rect x="60.0" y="83.4" width="2.3" height="3" fill="#3fb5c2"/><rect x="66.6" y="61.0" width="2.3" height="3" fill="#3fb5c2"/><rect x="66.6" y="67.0" width="2.3" height="3" fill="#3fb5c2"/><rect x="66.6" y="72.9" width="2.3" height="3" fill="#3fb5c2"/><rect x="66.6" y="78.8" width="2.3" height="3" fill="#3fb5c2"/><rect x="66.6" y="84.7" width="2.3" height="3" fill="#3fb5c2"/><rect x="73.2" y="61.4" width="2.3" height="3" fill="#3fb5c2"/><rect x="73.2" y="67.6" width="2.3" height="3" fill="#3fb5c2"/><rect x="73.2" y="73.7" width="2.3" height="3" fill="#3fb5c2"/><rect x="73.2" y="79.8" width="2.3" height="3" fill="#3fb5c2"/><rect x="73.2" y="86.0" width="2.3" height="3" fill="#3fb5c2"/><rect x="79.8" y="61.8" width="2.3" height="3" fill="#3fb5c2"/><rect x="79.8" y="68.2" width="2.3" height="3" fill="#3fb5c2"/><rect x="79.8" y="74.5" width="2.3" height="3" fill="#3fb5c2"/><rect x="79.8" y="80.9" width="2.3" height="3" fill="#3fb5c2"/><rect x="79.8" y="87.3" width="2.3" height="3" fill="#3fb5c2"/><rect x="86.4" y="62.1" width="2.3" height="3" fill="#3fb5c2"/><rect x="86.4" y="68.8" width="2.3" height="3" fill="#3fb5c2"/><rect x="86.4" y="75.4" width="2.3" height="3" fill="#3fb5c2"/><rect x="86.4" y="82.0" width="2.3" height="3" fill="#3fb5c2"/><rect x="86.4" y="88.6" width="2.3" height="3" fill="#3fb5c2"/><rect x="99.6" y="69.0" width="3.6" height="4.6" fill="#3aa7b6"/><rect x="99.6" y="75.1" width="3.6" height="4.6" fill="#3aa7b6"/><rect x="99.6" y="81.2" width="3.6" height="4.6" fill="#3aa7b6"/><rect x="99.6" y="87.3" width="3.6" height="4.6" fill="#3aa7b6"/><rect x="99.6" y="93.4" width="3.6" height="4.6" fill="#3aa7b6"/><rect x="109.8" y="69.5" width="3.6" height="4.6" fill="#3aa7b6"/><rect x="109.8" y="75.8" width="3.6" height="4.6" fill="#3aa7b6"/><rect x="109.8" y="82.1" width="3.6" height="4.6" fill="#3aa7b6"/><rect x="109.8" y="88.5" width="3.6" height="4.6" fill="#3aa7b6"/><rect x="109.8" y="94.8" width="3.6" height="4.6" fill="#3aa7b6"/><rect x="120.0" y="70.0" width="3.6" height="4.6" fill="#3aa7b6"/><rect x="120.0" y="76.6" width="3.6" height="4.6" fill="#3aa7b6"/><rect x="120.0" y="83.1" width="3.6" height="4.6" fill="#3aa7b6"/><rect x="120.0" y="89.6" width="3.6" height="4.6" fill="#3aa7b6"/><rect x="120.0" y="96.1" width="3.6" height="4.6" fill="#3aa7b6"/><rect x="130.2" y="70.6" width="3.6" height="4.6" fill="#3aa7b6"/><rect x="130.2" y="77.3" width="3.6" height="4.6" fill="#3aa7b6"/><rect x="130.2" y="84.1" width="3.6" height="4.6" fill="#3aa7b6"/><rect x="130.2" y="90.8" width="3.6" height="4.6" fill="#3aa7b6"/><rect x="130.2" y="97.5" width="3.6" height="4.6" fill="#3aa7b6"/><rect x="140.4" y="71.1" width="3.6" height="4.6" fill="#3aa7b6"/><rect x="140.4" y="78.1" width="3.6" height="4.6" fill="#3aa7b6"/><rect x="140.4" y="85.0" width="3.6" height="4.6" fill="#3aa7b6"/><rect x="140.4" y="92.0" width="3.6" height="4.6" fill="#3aa7b6"/><rect x="140.4" y="98.9" width="3.6" height="4.6" fill="#3aa7b6"/><rect x="150.6" y="71.7" width="3.6" height="4.6" fill="#3aa7b6"/><rect x="150.6" y="78.8" width="3.6" height="4.6" fill="#3aa7b6"/><rect x="150.6" y="86.0" width="3.6" height="4.6" fill="#3aa7b6"/><rect x="150.6" y="93.1" width="3.6" height="4.6" fill="#3aa7b6"/><rect x="150.6" y="100.3" width="3.6" height="4.6" fill="#3aa7b6"/><rect x="10.0" y="57.0" width="2" height="3.4" fill="#3aa9b8"/><rect x="10.0" y="63.2" width="2" height="3.4" fill="#3aa9b8"/><rect x="10.0" y="69.4" width="2" height="3.4" fill="#3aa9b8"/><rect x="10.0" y="75.6" width="2" height="3.4" fill="#3aa9b8"/><rect x="14.8" y="57.3" width="2" height="3.4" fill="#3aa9b8"/><rect x="14.8" y="63.5" width="2" height="3.4" fill="#3aa9b8"/><rect x="14.8" y="69.7" width="2" height="3.4" fill="#3aa9b8"/><rect x="14.8" y="75.9" width="2" height="3.4" fill="#3aa9b8"/><rect x="19.6" y="57.6" width="2" height="3.4" fill="#3aa9b8"/><rect x="19.6" y="63.8" width="2" height="3.4" fill="#3aa9b8"/><rect x="19.6" y="70.0" width="2" height="3.4" fill="#3aa9b8"/><rect x="19.6" y="76.2" width="2" height="3.4" fill="#3aa9b8"/></svg>
<div style="position:absolute;left:617.70px;top:1240.30px;width:98.30px;height:34.90px;background:#fff;border-radius:9px;"></div>
<div style="position:absolute;left:640.90px;top:1246.83px;font-family:'Liberation Sans',sans-serif;font-size:23px;line-height:1;font-weight:400;color:#2b4c9b;letter-spacing:-0.734px;white-space:pre;">8.5%</div>
<div style="position:absolute;left:253.00px;top:1385.50px;width:128.40px;height:25.80px;background:#bfd7f8;border-radius:13px;"></div>
<svg style="position:absolute;left:265.50px;top:1388.00px;" width="21.00" height="21.00" viewBox="0 0 21 21"><path d="M10.5 1.5 L13 3.3 L16.1 3.1 L16.9 6.1 L19.5 7.9 L18.4 10.8 L19.5 13.7 L16.9 15.5 L16.1 18.5 L13 18.3 L10.5 20.1 L8 18.3 L4.9 18.5 L4.1 15.5 L1.5 13.7 L2.6 10.8 L1.5 7.9 L4.1 6.1 L4.9 3.1 L8 3.3 Z" fill="none" stroke="#2a5bc4" stroke-width="1.9" stroke-linejoin="round"/><path d="M6.8 10.8 L9.5 13.4 L14.3 8.5" fill="none" stroke="#2a5bc4" stroke-width="1.9"/></svg>
<div style="position:absolute;left:294.40px;top:1390.26px;font-family:'Liberation Sans',sans-serif;font-size:18px;line-height:1;font-weight:400;color:#404a5c;letter-spacing:-0.250px;white-space:pre;">Prototype</div>
<div style="position:absolute;left:388.00px;top:1385.50px;width:226.00px;height:25.80px;background:#e5e6ec;border-radius:13px;"></div>
<div style="position:absolute;left:399.80px;top:1390.26px;font-family:'Liberation Sans',sans-serif;font-size:18px;line-height:1;font-weight:400;color:#474b58;letter-spacing:-0.425px;white-space:pre;">Center-Loaded Front Entry</div>
<div style="position:absolute;left:253.00px;top:1418.00px;width:183.40px;height:24.50px;background:#e5e6ec;border-radius:13px;"></div>
<div style="position:absolute;left:265.30px;top:1422.26px;font-family:'Liberation Sans',sans-serif;font-size:18px;line-height:1;font-weight:400;color:#474b58;letter-spacing:-0.477px;white-space:pre;">Bar &amp; Meeting Room</div>
<div style="position:absolute;left:443.00px;top:1418.00px;width:84.00px;height:24.50px;background:#e5e6ec;border-radius:13px;"></div>
<div style="position:absolute;left:454.70px;top:1422.26px;font-family:'Liberation Sans',sans-serif;font-size:18px;line-height:1;font-weight:400;color:#474b58;letter-spacing:-0.464px;white-space:pre;">No Pool</div>
<div style="position:absolute;left:231.00px;top:1459.00px;width:511.00px;height:1.50px;background:#cdd0de;"></div>
<div style="position:absolute;left:231.00px;top:1460.50px;width:511.00px;height:247.50px;background:#f8f8fd;"></div>
<div style="position:absolute;left:253.80px;top:1484.22px;font-family:'Liberation Sans',sans-serif;font-size:21px;line-height:1;font-weight:400;color:#3c3c3c;letter-spacing:-0.565px;white-space:pre;">#AC732</div>
<svg style="position:absolute;left:344.00px;top:1481.50px;" width="26.00" height="25.00" viewBox="0 0 26 25"><path d="M13 1.8 L16.2 9.2 L24.2 9.9 L18.1 15.2 L19.9 23 L13 18.9 L6.1 23 L7.9 15.2 L1.8 9.9 L9.8 9.2 Z" fill="#2f6ed8" stroke="#2f6ed8" stroke-width="1.6" stroke-linejoin="round"/></svg>
<svg style="position:absolute;left:260.50px;top:1527.00px;" width="20.00" height="18.00" viewBox="0 0 20 18"><path d="M2.2 16.5 V4.5 L9.5 1.5 V16.5" fill="none" stroke="#2e3558" stroke-width="2"/><path d="M9.5 6 L16 7.5 V16.5 H9.5 Z" fill="#2e3558"/><path d="M0.5 16.7 H19.5" stroke="#2e3558" stroke-width="2.2"/></svg>
<svg style="position:absolute;left:262.50px;top:1559.50px;" width="16.00" height="21.00" viewBox="0 0 16 21"><path d="M4.5 2.5 Q8 -0.5 11.5 2.5 L15 6.5 V18.5 Q15 20.5 13 20.5 H3 Q1 20.5 1 18.5 V6.5 Z" fill="#2e3558"/><circle cx="8" cy="4.5" r="1.3" fill="#fff"/><path d="M10.6 9.6 Q10 8.2 8 8.2 Q5.4 8.2 5.4 10.2 Q5.4 11.9 8 12.3 Q10.7 12.7 10.7 14.5 Q10.7 16.5 8 16.5 Q5.9 16.5 5.2 15" fill="none" stroke="#fff" stroke-width="1.5"/><path d="M8 6.8 V8.2 M8 16.5 V18" stroke="#fff" stroke-width="1.5"/></svg>
<svg style="position:absolute;left:260.50px;top:1596.50px;" width="20.00" height="16.00" viewBox="0 0 20 16"><rect x="0.5" y="0.5" width="19" height="15" rx="1" fill="#2e3558"/><path d="M4 10.5 L7.5 7.5 L10 9.5 L14.5 5.5" fill="none" stroke="#fff" stroke-width="1.8"/><path d="M12 4.2 H15.8 V8" fill="none" stroke="#fff" stroke-width="1.6"/></svg>
<div style="position:absolute;left:300.50px;top:1524.94px;font-family:'Liberation Sans',sans-serif;font-size:20.5px;line-height:1;font-weight:400;color:#2a2a2a;letter-spacing:-0.545px;white-space:pre;"><span style="color:#222">122 </span><span style="color:#4a4a4a">keys</span></div>
<div style="position:absolute;left:447.00px;top:1524.94px;font-family:'Liberation Sans',sans-serif;font-size:20.5px;line-height:1;font-weight:400;color:#2a2a2a;letter-spacing:-0.258px;white-space:pre;">6 Floors</div>
<div style="position:absolute;left:300.50px;top:1559.64px;font-family:'Liberation Sans',sans-serif;font-size:20.5px;line-height:1;font-weight:400;color:#222;letter-spacing:-0.077px;white-space:pre;">19.6M</div>
<div style="position:absolute;left:429.50px;top:1559.64px;font-family:'Liberation Sans',sans-serif;font-size:20.5px;line-height:1;font-weight:400;color:#4a6590;letter-spacing:0.194px;white-space:pre;">161k /key</div>
<div style="position:absolute;left:300.50px;top:1594.34px;font-family:'Liberation Sans',sans-serif;font-size:20.5px;line-height:1;font-weight:400;color:#2a2a2a;letter-spacing:-0.459px;white-space:pre;"><span style="color:#222">8.5% </span><span style="color:#4a4a4a">yield</span></div>
<div style="position:absolute;left:468.00px;top:1594.34px;font-family:'Liberation Sans',sans-serif;font-size:20.5px;line-height:1;font-weight:400;color:#4a6590;letter-spacing:0.169px;white-space:pre;">0.92x</div>
<div style="position:absolute;left:542.80px;top:1477.20px;width:185.20px;height:138.30px;background:#dddfe6;border-radius:12px;"></div>
<svg style="position:absolute;left:542.80px;top:1477.20px;" width="185.00" height="138.00" viewBox="0 0 185 138"><path d="M1.5 80 L24 84 L96.4 101 L160.2 112.5 L160.5 115.5 L96 104 L24 87 L1 82.5 Z" fill="#7fb27a"/><path d="M160 114 L185 97.5 L185 100 L162 116Z" fill="#8cbf86"/><path d="M144 120 L159 117 L160 124 L146 124Z" fill="#7fb27a"/><path d="M5 84 L40 92 L70 100 L62 102 L5 88Z" fill="#e9eaee" opacity="0.5"/><path d="M7.9 54 L24.2 51.7 L24.2 83.8 L8.4 80.1 Z" fill="#f1f2f4"/><path d="M7 53 L24.2 50.5 L24.2 52.5 L7.9 54.5Z" fill="#6e7074"/><path d="M24.2 51.7 L104.3 55.4 L104.3 60 L96.4 60 L96.4 100.5 L24.2 83.8 Z" fill="#5e6064"/><path d="M24.2 50.3 L104.3 54 L104.3 56 L24.2 52.3Z" fill="#77797d"/><path d="M50 88 L72 94 L72 87 L50 81.5Z" fill="#e8e9ea"/><path d="M51.5 88 L70.5 93 L70.5 88 L51.5 83Z" fill="#4e5155"/><path d="M96.4 59.5 L168.5 63 L170 64 L168.5 66.6 L96.4 62.8 Z" fill="#77797d"/><path d="M96.4 62.8 L160.2 66.2 L160.2 112.2 L96.4 101 Z" fill="#f3f4f6"/><path d="M96.4 96 L160.2 106.5 L160.2 112.2 L96.4 101Z" fill="#e6e7ea"/><path d="M160.2 66.2 L168.5 66.6 L168.5 102 L160.2 112.2Z" fill="#e2e3e6"/><rect x="27.0" y="58.9" width="2.3" height="3" fill="#3fb5c2"/><rect x="27.0" y="63.4" width="2.3" height="3" fill="#3fb5c2"/><rect x="27.0" y="67.9" width="2.3" height="3" fill="#3fb5c2"/><rect x="27.0" y="72.4" width="2.3" height="3" fill="#3fb5c2"/><rect x="27.0" y="76.9" width="2.3" height="3" fill="#3fb5c2"/><rect x="33.6" y="59.2" width="2.3" height="3" fill="#3fb5c2"/><rect x="33.6" y="64.0" width="2.3" height="3" fill="#3fb5c2"/><rect x="33.6" y="68.7" width="2.3" height="3" fill="#3fb5c2"/><rect x="33.6" y="73.5" width="2.3" height="3" fill="#3fb5c2"/><rect x="33.6" y="78.2" width="2.3" height="3" fill="#3fb5c2"/><rect x="40.2" y="59.6" width="2.3" height="3" fill="#3fb5c2"/><rect x="40.2" y="64.6" width="2.3" height="3" fill="#3fb5c2"/><rect x="40.2" y="69.6" width="2.3" height="3" fill="#3fb5c2"/><rect x="40.2" y="74.5" width="2.3" height="3" fill="#3fb5c2"/><rect x="40.2" y="79.5" width="2.3" height="3" fill="#3fb5c2"/><rect x="46.8" y="60.0" width="2.3" height="3" fill="#3fb5c2"/><rect x="46.8" y="65.2" width="2.3" height="3" fill="#3fb5c2"/><rect x="46.8" y="70.4" width="2.3" height="3" fill="#3fb5c2"/><rect x="46.8" y="75.6" width="2.3" height="3" fill="#3fb5c2"/><rect x="46.8" y="80.8" width="2.3" height="3" fill="#3fb5c2"/><rect x="53.4" y="60.3" width="2.3" height="3" fill="#3fb5c2"/><rect x="53.4" y="65.8" width="2.3" height="3" fill="#3fb5c2"/><rect x="53.4" y="71.2" width="2.3" height="3" fill="#3fb5c2"/><rect x="53.4" y="76.7" width="2.3" height="3" fill="#3fb5c2"/><rect x="53.4" y="82.1" width="2.3" height="3" fill="#3fb5c2"/><rect x="60.0" y="60.7" width="2.3" height="3" fill="#3fb5c2"/><rect x="60.0" y="66.4" width="2.3" height="3" fill="#3fb5c2"/><rect x="60.0" y="72.0" width="2.3" height="3" fill="#3fb5c2"/><rect x="60.0" y="77.7" width="2.3" height="3" fill="#3fb5c2"/><rect x="60.0" y="83.4" width="2.3" height="3" fill="#3fb5c2"/><rect x="66.6" y="61.0" width="2.3" height="3" fill="#3fb5c2"/><rect x="66.6" y="67.0" width="2.3" height="3" fill="#3fb5c2"/><rect x="66.6" y="72.9" width="2.3" height="3" fill="#3fb5c2"/><rect x="66.6" y="78.8" width="2.3" height="3" fill="#3fb5c2"/><rect x="66.6" y="84.7" width="2.3" height="3" fill="#3fb5c2"/><rect x="73.2" y="61.4" width="2.3" height="3" fill="#3fb5c2"/><rect x="73.2" y="67.6" width="2.3" height="3" fill="#3fb5c2"/><rect x="73.2" y="73.7" width="2.3" height="3" fill="#3fb5c2"/><rect x="73.2" y="79.8" width="2.3" height="3" fill="#3fb5c2"/><rect x="73.2" y="86.0" width="2.3" height="3" fill="#3fb5c2"/><rect x="79.8" y="61.8" width="2.3" height="3" fill="#3fb5c2"/><rect x="79.8" y="68.2" width="2.3" height="3" fill="#3fb5c2"/><rect x="79.8" y="74.5" width="2.3" height="3" fill="#3fb5c2"/><rect x="79.8" y="80.9" width="2.3" height="3" fill="#3fb5c2"/><rect x="79.8" y="87.3" width="2.3" height="3" fill="#3fb5c2"/><rect x="86.4" y="62.1" width="2.3" height="3" fill="#3fb5c2"/><rect x="86.4" y="68.8" width="2.3" height="3" fill="#3fb5c2"/><rect x="86.4" y="75.4" width="2.3" height="3" fill="#3fb5c2"/><rect x="86.4" y="82.0" width="2.3" height="3" fill="#3fb5c2"/><rect x="86.4" y="88.6" width="2.3" height="3" fill="#3fb5c2"/><rect x="99.6" y="69.0" width="3.6" height="4.6" fill="#3aa7b6"/><rect x="99.6" y="75.1" width="3.6" height="4.6" fill="#3aa7b6"/><rect x="99.6" y="81.2" width="3.6" height="4.6" fill="#3aa7b6"/><rect x="99.6" y="87.3" width="3.6" height="4.6" fill="#3aa7b6"/><rect x="99.6" y="93.4" width="3.6" height="4.6" fill="#3aa7b6"/><rect x="109.8" y="69.5" width="3.6" height="4.6" fill="#3aa7b6"/><rect x="109.8" y="75.8" width="3.6" height="4.6" fill="#3aa7b6"/><rect x="109.8" y="82.1" width="3.6" height="4.6" fill="#3aa7b6"/><rect x="109.8" y="88.5" width="3.6" height="4.6" fill="#3aa7b6"/><rect x="109.8" y="94.8" width="3.6" height="4.6" fill="#3aa7b6"/><rect x="120.0" y="70.0" width="3.6" height="4.6" fill="#3aa7b6"/><rect x="120.0" y="76.6" width="3.6" height="4.6" fill="#3aa7b6"/><rect x="120.0" y="83.1" width="3.6" height="4.6" fill="#3aa7b6"/><rect x="120.0" y="89.6" width="3.6" height="4.6" fill="#3aa7b6"/><rect x="120.0" y="96.1" width="3.6" height="4.6" fill="#3aa7b6"/><rect x="130.2" y="70.6" width="3.6" height="4.6" fill="#3aa7b6"/><rect x="130.2" y="77.3" width="3.6" height="4.6" fill="#3aa7b6"/><rect x="130.2" y="84.1" width="3.6" height="4.6" fill="#3aa7b6"/><rect x="130.2" y="90.8" width="3.6" height="4.6" fill="#3aa7b6"/><rect x="130.2" y="97.5" width="3.6" height="4.6" fill="#3aa7b6"/><rect x="140.4" y="71.1" width="3.6" height="4.6" fill="#3aa7b6"/><rect x="140.4" y="78.1" width="3.6" height="4.6" fill="#3aa7b6"/><rect x="140.4" y="85.0" width="3.6" height="4.6" fill="#3aa7b6"/><rect x="140.4" y="92.0" width="3.6" height="4.6" fill="#3aa7b6"/><rect x="140.4" y="98.9" width="3.6" height="4.6" fill="#3aa7b6"/><rect x="150.6" y="71.7" width="3.6" height="4.6" fill="#3aa7b6"/><rect x="150.6" y="78.8" width="3.6" height="4.6" fill="#3aa7b6"/><rect x="150.6" y="86.0" width="3.6" height="4.6" fill="#3aa7b6"/><rect x="150.6" y="93.1" width="3.6" height="4.6" fill="#3aa7b6"/><rect x="150.6" y="100.3" width="3.6" height="4.6" fill="#3aa7b6"/><rect x="10.0" y="57.0" width="2" height="3.4" fill="#3aa9b8"/><rect x="10.0" y="63.2" width="2" height="3.4" fill="#3aa9b8"/><rect x="10.0" y="69.4" width="2" height="3.4" fill="#3aa9b8"/><rect x="10.0" y="75.6" width="2" height="3.4" fill="#3aa9b8"/><rect x="14.8" y="57.3" width="2" height="3.4" fill="#3aa9b8"/><rect x="14.8" y="63.5" width="2" height="3.4" fill="#3aa9b8"/><rect x="14.8" y="69.7" width="2" height="3.4" fill="#3aa9b8"/><rect x="14.8" y="75.9" width="2" height="3.4" fill="#3aa9b8"/><rect x="19.6" y="57.6" width="2" height="3.4" fill="#3aa9b8"/><rect x="19.6" y="63.8" width="2" height="3.4" fill="#3aa9b8"/><rect x="19.6" y="70.0" width="2" height="3.4" fill="#3aa9b8"/><rect x="19.6" y="76.2" width="2" height="3.4" fill="#3aa9b8"/></svg>
<div style="position:absolute;left:617.70px;top:1488.80px;width:98.30px;height:34.90px;background:#fff;border-radius:9px;"></div>
<div style="position:absolute;left:640.90px;top:1495.33px;font-family:'Liberation Sans',sans-serif;font-size:23px;line-height:1;font-weight:400;color:#2b4c9b;letter-spacing:-0.734px;white-space:pre;">8.5%</div>
<div style="position:absolute;left:253.00px;top:1634.00px;width:128.40px;height:25.80px;background:#bfd7f8;border-radius:13px;"></div>
<svg style="position:absolute;left:265.50px;top:1636.50px;" width="21.00" height="21.00" viewBox="0 0 21 21"><path d="M10.5 1.5 L13 3.3 L16.1 3.1 L16.9 6.1 L19.5 7.9 L18.4 10.8 L19.5 13.7 L16.9 15.5 L16.1 18.5 L13 18.3 L10.5 20.1 L8 18.3 L4.9 18.5 L4.1 15.5 L1.5 13.7 L2.6 10.8 L1.5 7.9 L4.1 6.1 L4.9 3.1 L8 3.3 Z" fill="none" stroke="#2a5bc4" stroke-width="1.9" stroke-linejoin="round"/><path d="M6.8 10.8 L9.5 13.4 L14.3 8.5" fill="none" stroke="#2a5bc4" stroke-width="1.9"/></svg>
<div style="position:absolute;left:294.40px;top:1638.76px;font-family:'Liberation Sans',sans-serif;font-size:18px;line-height:1;font-weight:400;color:#404a5c;letter-spacing:-0.250px;white-space:pre;">Prototype</div>
<div style="position:absolute;left:388.00px;top:1634.00px;width:226.00px;height:25.80px;background:#e5e6ec;border-radius:13px;"></div>
<div style="position:absolute;left:399.80px;top:1638.76px;font-family:'Liberation Sans',sans-serif;font-size:18px;line-height:1;font-weight:400;color:#474b58;letter-spacing:-0.425px;white-space:pre;">Center-Loaded Front Entry</div>
<div style="position:absolute;left:253.00px;top:1666.50px;width:183.40px;height:24.50px;background:#e5e6ec;border-radius:13px;"></div>
<div style="position:absolute;left:265.30px;top:1670.76px;font-family:'Liberation Sans',sans-serif;font-size:18px;line-height:1;font-weight:400;color:#474b58;letter-spacing:-0.477px;white-space:pre;">Bar &amp; Meeting Room</div>
<div style="position:absolute;left:443.00px;top:1666.50px;width:84.00px;height:24.50px;background:#e5e6ec;border-radius:13px;"></div>
<div style="position:absolute;left:454.70px;top:1670.76px;font-family:'Liberation Sans',sans-serif;font-size:18px;line-height:1;font-weight:400;color:#474b58;letter-spacing:-0.464px;white-space:pre;">No Pool</div>
<div style="position:absolute;left:742.00px;top:707.00px;width:9.00px;height:879.00px;background:#eeeff3;"></div>
<div style="position:absolute;left:742.00px;top:708.00px;width:9.00px;height:135.00px;background:#6e7273;"></div>
<div style="position:absolute;left:751.00px;top:1420.00px;width:71.00px;height:145.00px;background:#f4f3f3;border-bottom:2.5px solid #c9cbd9;border-radius:0 0 16px 0;box-sizing:border-box;"></div>
<div style="position:absolute;left:751.00px;top:1425.00px;width:71.00px;height:1.00px;background:#e6e4e4;"></div>
<div style="position:absolute;left:751.00px;top:1449.50px;width:71.00px;height:1.00px;background:#e6e4e4;"></div>
<div style="position:absolute;left:751.00px;top:1544.00px;width:71.00px;height:1.00px;background:#ead6d6;"></div>
<div style="position:absolute;left:752.00px;top:1482.00px;width:13.00px;height:33.00px;background:linear-gradient(180deg,#7fb0aa 0 18%,#d3d1d3 18% 80%,#7fb0aa 80% 100%);border-radius:3px;opacity:0.65;"></div>
<div style="position:absolute;left:780.00px;top:128.00px;width:668.50px;height:1423.00px;background:#fff;border-radius:20px;box-shadow:0 2px 10px rgba(0,0,0,0.14);"></div>
<div style="position:absolute;left:814.80px;top:157.16px;font-family:'Liberation Sans',sans-serif;font-size:24.5px;line-height:1;font-weight:700;color:#2e3a66;letter-spacing:-1.619px;white-space:pre;">Street Frontage and Setbacks</div>
<div style="position:absolute;left:780.00px;top:207.50px;width:668.50px;height:1.50px;background:#cfd2e2;"></div>
<svg style="position:absolute;left:808.20px;top:234.50px;" width="24.00" height="29.00" viewBox="0 0 24 29"><path d="M12 2.3 C6.6 2.3 2.3 6.5 2.3 11.6 C2.3 17.8 12 26.6 12 26.6 C12 26.6 21.7 17.8 21.7 11.6 C21.7 6.5 17.4 2.3 12 2.3 Z" fill="none" stroke="#2a4aa0" stroke-width="2.6" stroke-linejoin="round"/><circle cx="12" cy="11.4" r="3.1" fill="#2a4aa0"/></svg>
<div style="position:absolute;left:861.50px;top:238.37px;font-family:'Liberation Sans',sans-serif;font-size:22px;line-height:1;font-weight:400;color:#2e2e30;letter-spacing:-0.962px;white-space:pre;">71 West Hubbard Street Chicago, IL 60654</div>
<svg style="position:absolute;left:802.50px;top:297.00px;" width="37.00" height="22.00" viewBox="0 0 37 22"><g fill="none" stroke="#2a4aa0" stroke-width="2.5" stroke-linecap="round" stroke-linejoin="round"><path d="M10.8 3.8 Q18.3 -0.6 25.8 3.8"/><path d="M10.8 17.1 Q18.3 21.6 25.8 17.1"/><path d="M7 6.4 Q4 8.4 1.6 10.4 Q4 12.4 7 14.6"/><path d="M29.4 6.4 Q32.4 8.4 34.9 10.4 Q32.4 12.4 29.4 14.6"/><path d="M11.5 10.4 H16 M20 10.4 H24.2 M17.9 7.5 V9 M17.9 12 V13.5" stroke-width="1.7"/></g><g fill="#2a4aa0"><path d="M17.9 4.6 L14.4 8 H21.4Z"/><path d="M17.9 16.2 L14.4 12.8 H21.4Z"/><path d="M8.2 10.4 L12 7.2 V13.6Z"/><path d="M27.6 10.4 L23.8 7.2 V13.6Z"/></g></svg>
<div style="position:absolute;left:861.50px;top:296.37px;font-family:'Liberation Sans',sans-serif;font-size:22px;line-height:1;font-weight:400;color:#2e2e30;letter-spacing:-1.011px;white-space:pre;">49.07 acres (21,000 sf)</div>
<svg style="position:absolute;left:802.50px;top:350.50px;" width="38.00" height="26.00" viewBox="0 0 38 26"><g stroke="#2a4aa0" stroke-width="2.3" stroke-linejoin="round" stroke-linecap="round"><path d="M18.9 1 L30 7.2 L18.9 13.2 L7.8 7.2 Z" fill="#b9d0fa"/><path d="M7.8 7.2 V15.6 L18.9 21 V13.2 M30 7.2 V15.6 L18.9 21" fill="none"/><path d="M6.6 11 Q3.5 13 1.8 15.3 Q4.5 18 8.7 19.8 M31.2 11 Q34.3 13 36.1 15.3 Q33.4 18 29 19.8 M11.5 21.6 Q18.9 26 26.4 21.6" fill="none" stroke-width="2.5"/></g></svg>
<div style="position:absolute;left:861.50px;top:354.07px;font-family:'Liberation Sans',sans-serif;font-size:22px;line-height:1;font-weight:400;color:#2e2e30;letter-spacing:-0.531px;white-space:pre;">MU-3A</div>
<div style="position:absolute;left:780.00px;top:404.00px;width:668.50px;height:76.00px;background:#f0f1f4;border-top:1.5px solid #cfd2e2;border-bottom:1.5px solid #cfd2e2;box-sizing:border-box;"></div>
<div style="position:absolute;left:814.80px;top:432.37px;font-family:'Liberation Sans',sans-serif;font-size:22px;line-height:1;font-weight:700;color:#222;letter-spacing:-1.885px;white-space:pre;">Zoning</div>
<svg style="position:absolute;left:1398.00px;top:436.00px;" width="20.00" height="13.00" viewBox="0 0 20 13"><path d="M2 11 L10 3 L18 11" stroke="#333" stroke-width="2.4" fill="none"/></svg>
<div style="position:absolute;left:803.60px;top:505.00px;width:621.20px;height:259.00px;background:#f0f2fb;border:1.5px solid #c9cbd6;box-sizing:border-box;border-radius:6px;"></div>
<div style="position:absolute;left:832.50px;top:531.42px;font-family:'Liberation Sans',sans-serif;font-size:21px;line-height:1;font-weight:400;color:#2e2e30;letter-spacing:-0.505px;white-space:pre;">Zoning Code</div>
<div style="position:absolute;left:1108.80px;top:531.42px;font-family:'Liberation Sans',sans-serif;font-size:21px;line-height:1;font-weight:400;color:#2e2e30;letter-spacing:0.171px;white-space:pre;">MU-3A</div>
<div style="position:absolute;left:832.50px;top:577.72px;font-family:'Liberation Sans',sans-serif;font-size:21px;line-height:1;font-weight:400;color:#2e2e30;letter-spacing:-0.239px;white-space:pre;">Zoning Description</div>
<div style="position:absolute;left:1108.80px;top:577.72px;font-family:'Liberation Sans',sans-serif;font-size:21px;line-height:1;font-weight:400;color:#2e2e30;letter-spacing:-0.556px;white-space:pre;">Mixed Use</div>
<div style="position:absolute;left:832.50px;top:624.02px;font-family:'Liberation Sans',sans-serif;font-size:21px;line-height:1;font-weight:400;color:#2e2e30;letter-spacing:-0.518px;white-space:pre;">Zoning Type</div>
<div style="position:absolute;left:1108.80px;top:624.02px;font-family:'Liberation Sans',sans-serif;font-size:21px;line-height:1;font-weight:400;color:#2e2e30;letter-spacing:-0.266px;white-space:pre;">Mixed</div>
<div style="position:absolute;left:832.50px;top:670.32px;font-family:'Liberation Sans',sans-serif;font-size:21px;line-height:1;font-weight:400;color:#2e2e30;letter-spacing:-0.465px;white-space:pre;">Zoning Subtype</div>
<div style="position:absolute;left:1108.80px;top:670.32px;font-family:'Liberation Sans',sans-serif;font-size:21px;line-height:1;font-weight:400;color:#2e2e30;letter-spacing:-0.556px;white-space:pre;">Mixed Use</div>
<div style="position:absolute;left:832.50px;top:716.62px;font-family:'Liberation Sans',sans-serif;font-size:21px;line-height:1;font-weight:400;color:#2e2e30;letter-spacing:-0.476px;white-space:pre;">Zoning Code Link</div>
<div style="position:absolute;left:1108.80px;top:716.62px;font-family:'Liberation Sans',sans-serif;font-size:21px;line-height:1;font-weight:400;color:#2e2e30;letter-spacing:-0.508px;white-space:pre;">Link</div>
<div style="position:absolute;left:1108.50px;top:741.50px;width:36.50px;height:1.50px;background:#333;"></div>
<div style="position:absolute;left:803.60px;top:788.00px;width:621.20px;height:110.00px;background:#f0f1fa;border-radius:22px;"></div>
<div style="position:absolute;left:832.00px;top:837.22px;font-family:'Liberation Sans',sans-serif;font-size:12.5px;line-height:1;font-weight:700;color:#2e3558;letter-spacing:-0.333px;white-space:pre;">FAR</div>
<div style="position:absolute;left:884.40px;top:818.42px;font-family:'Liberation Sans',sans-serif;font-size:21px;line-height:1;font-weight:400;color:#2e2e30;letter-spacing:-0.550px;white-space:pre;">Max Floor Area Ratio (FAR)</div>
<div style="position:absolute;left:884.40px;top:851.48px;font-family:'Liberation Sans',sans-serif;font-size:18.8px;line-height:1;font-weight:400;color:#7a7f94;letter-spacing:-0.981px;white-space:pre;">Suggested Zoning:</div>
<div style="position:absolute;left:1039.50px;top:851.48px;font-family:'Liberation Sans',sans-serif;font-size:18.8px;line-height:1;font-weight:400;color:#3fa83a;letter-spacing:0.000px;white-space:pre;">-</div>
<div style="position:absolute;left:1215.00px;top:831.72px;font-family:'Liberation Sans',sans-serif;font-size:21px;line-height:1;font-weight:400;color:#2e2e30;letter-spacing:0.000px;white-space:pre;">-</div>
<div style="position:absolute;left:1257.50px;top:820.00px;width:75.30px;height:46.00px;background:#2a4ea6;border-radius:23px;"></div>
<div style="position:absolute;left:1292.00px;top:825.60px;width:35.00px;height:34.90px;background:#fff;border-radius:50%;"></div>
<div style="position:absolute;left:1344.60px;top:820.00px;width:57.00px;height:46.00px;border:1.6px solid #c4c4ca;box-sizing:border-box;border-radius:23px;"></div>
<svg style="position:absolute;left:1361.20px;top:831.00px;" width="24.00" height="24.00" viewBox="0 0 24 24"><path d="M3.5 20.5 L4.2 16.2 L16.3 4.1 Q17.6 2.8 18.9 4.1 L19.9 5.1 Q21.2 6.4 19.9 7.7 L7.8 19.8 Z" fill="none" stroke="#38383e" stroke-width="2.3" stroke-linejoin="round"/><path d="M15.6 4.8 Q17.6 2.8 19.2 4.4 L19.6 4.8 Q21.2 6.4 19.2 8.4 Z" fill="#38383e"/></svg>
<div style="position:absolute;left:803.60px;top:909.50px;width:621.20px;height:110.00px;background:#f0f1fa;border-radius:22px;"></div>
<svg style="position:absolute;left:829.00px;top:951.50px;" width="30.00" height="26.00" viewBox="0 0 30 26"><path d="M3.5 23 V8 L13 4 V23" fill="none" stroke="#2e3558" stroke-width="2.2"/><path d="M13 10 L21 12 V23 H13Z" fill="#2e3558"/><path d="M1 24 H23" stroke="#2e3558" stroke-width="2.4"/><path d="M26.5 1.5 V24.5 M24.5 1.5 H28.5 M24.5 24.5 H28.5" stroke="#2e3558" stroke-width="1.8"/></svg>
<div style="position:absolute;left:884.40px;top:939.92px;font-family:'Liberation Sans',sans-serif;font-size:21px;line-height:1;font-weight:400;color:#2e2e30;letter-spacing:-0.198px;white-space:pre;">Max Building Height</div>
<div style="position:absolute;left:884.40px;top:972.98px;font-family:'Liberation Sans',sans-serif;font-size:18.8px;line-height:1;font-weight:400;color:#7a7f94;letter-spacing:-0.981px;white-space:pre;">Suggested Zoning:</div>
<div style="position:absolute;left:1039.50px;top:972.98px;font-family:'Liberation Sans',sans-serif;font-size:18.8px;line-height:1;font-weight:400;color:#3fa83a;letter-spacing:0.000px;white-space:pre;">-</div>
<div style="position:absolute;left:1215.00px;top:953.22px;font-family:'Liberation Sans',sans-serif;font-size:21px;line-height:1;font-weight:400;color:#2e2e30;letter-spacing:0.000px;white-space:pre;">-</div>
<div style="position:absolute;left:1257.50px;top:941.50px;width:75.30px;height:46.00px;background:#2a4ea6;border-radius:23px;"></div>
<div style="position:absolute;left:1292.00px;top:947.10px;width:35.00px;height:34.90px;background:#fff;border-radius:50%;"></div>
<div style="position:absolute;left:1344.60px;top:941.50px;width:57.00px;height:46.00px;border:1.6px solid #c4c4ca;box-sizing:border-box;border-radius:23px;"></div>
<svg style="position:absolute;left:1361.20px;top:952.50px;" width="24.00" height="24.00" viewBox="0 0 24 24"><path d="M3.5 20.5 L4.2 16.2 L16.3 4.1 Q17.6 2.8 18.9 4.1 L19.9 5.1 Q21.2 6.4 19.9 7.7 L7.8 19.8 Z" fill="none" stroke="#38383e" stroke-width="2.3" stroke-linejoin="round"/><path d="M15.6 4.8 Q17.6 2.8 19.2 4.4 L19.6 4.8 Q21.2 6.4 19.2 8.4 Z" fill="#38383e"/></svg>
<div style="position:absolute;left:803.60px;top:1031.00px;width:621.20px;height:110.00px;background:#f0f1fa;border-radius:22px;"></div>
<svg style="position:absolute;left:830.50px;top:1072.00px;" width="28.00" height="28.00" viewBox="0 0 28 28"><rect x="0.5" y="0.8" width="10" height="26.5" rx="3" fill="#2a4ea6"/><rect x="12.2" y="1.2" width="1.9" height="1.9" fill="#9597a4"/><rect x="15.0" y="1.2" width="1.9" height="1.9" fill="#9597a4"/><rect x="17.8" y="1.2" width="1.9" height="1.9" fill="#9597a4"/><rect x="20.6" y="1.2" width="1.9" height="1.9" fill="#9597a4"/><rect x="23.4" y="1.2" width="1.9" height="1.9" fill="#9597a4"/><rect x="13.6" y="4.0" width="1.9" height="1.9" fill="#9597a4"/><rect x="16.4" y="4.0" width="1.9" height="1.9" fill="#9597a4"/><rect x="19.2" y="4.0" width="1.9" height="1.9" fill="#9597a4"/><rect x="22.0" y="4.0" width="1.9" height="1.9" fill="#9597a4"/><rect x="24.8" y="4.0" width="1.9" height="1.9" fill="#9597a4"/><rect x="12.2" y="6.8" width="1.9" height="1.9" fill="#9597a4"/><rect x="15.0" y="6.8" width="1.9" height="1.9" fill="#9597a4"/><rect x="17.8" y="6.8" width="1.9" height="1.9" fill="#9597a4"/><rect x="20.6" y="6.8" width="1.9" height="1.9" fill="#9597a4"/><rect x="23.4" y="6.8" width="1.9" height="1.9" fill="#9597a4"/><rect x="13.6" y="9.6" width="1.9" height="1.9" fill="#9597a4"/><rect x="16.4" y="9.6" width="1.9" height="1.9" fill="#9597a4"/><rect x="19.2" y="9.6" width="1.9" height="1.9" fill="#9597a4"/><rect x="22.0" y="9.6" width="1.9" height="1.9" fill="#9597a4"/><rect x="24.8" y="9.6" width="1.9" height="1.9" fill="#9597a4"/><rect x="12.2" y="12.4" width="1.9" height="1.9" fill="#9597a4"/><rect x="15.0" y="12.4" width="1.9" height="1.9" fill="#9597a4"/><rect x="17.8" y="12.4" width="1.9" height="1.9" fill="#9597a4"/><rect x="20.6" y="12.4" width="1.9" height="1.9" fill="#9597a4"/><rect x="23.4" y="12.4" width="1.9" height="1.9" fill="#9597a4"/><rect x="13.6" y="15.2" width="1.9" height="1.9" fill="#9597a4"/><rect x="16.4" y="15.2" width="1.9" height="1.9" fill="#9597a4"/><rect x="19.2" y="15.2" width="1.9" height="1.9" fill="#9597a4"/><rect x="22.0" y="15.2" width="1.9" height="1.9" fill="#9597a4"/><rect x="24.8" y="15.2" width="1.9" height="1.9" fill="#9597a4"/><rect x="12.2" y="18.0" width="1.9" height="1.9" fill="#9597a4"/><rect x="15.0" y="18.0" width="1.9" height="1.9" fill="#9597a4"/><rect x="17.8" y="18.0" width="1.9" height="1.9" fill="#9597a4"/><rect x="20.6" y="18.0" width="1.9" height="1.9" fill="#9597a4"/><rect x="23.4" y="18.0" width="1.9" height="1.9" fill="#9597a4"/><rect x="13.6" y="20.8" width="1.9" height="1.9" fill="#9597a4"/><rect x="16.4" y="20.8" width="1.9" height="1.9" fill="#9597a4"/><rect x="19.2" y="20.8" width="1.9" height="1.9" fill="#9597a4"/><rect x="22.0" y="20.8" width="1.9" height="1.9" fill="#9597a4"/><rect x="24.8" y="20.8" width="1.9" height="1.9" fill="#9597a4"/><rect x="12.2" y="23.6" width="1.9" height="1.9" fill="#9597a4"/><rect x="15.0" y="23.6" width="1.9" height="1.9" fill="#9597a4"/><rect x="17.8" y="23.6" width="1.9" height="1.9" fill="#9597a4"/><rect x="20.6" y="23.6" width="1.9" height="1.9" fill="#9597a4"/><rect x="23.4" y="23.6" width="1.9" height="1.9" fill="#9597a4"/></svg>
<div style="position:absolute;left:884.40px;top:1061.42px;font-family:'Liberation Sans',sans-serif;font-size:21px;line-height:1;font-weight:400;color:#2e2e30;letter-spacing:-0.530px;white-space:pre;">Min. Open Space Ratio</div>
<div style="position:absolute;left:884.40px;top:1094.48px;font-family:'Liberation Sans',sans-serif;font-size:18.8px;line-height:1;font-weight:400;color:#7a7f94;letter-spacing:-0.981px;white-space:pre;">Suggested Zoning:</div>
<div style="position:absolute;left:1039.50px;top:1094.48px;font-family:'Liberation Sans',sans-serif;font-size:18.8px;line-height:1;font-weight:400;color:#3fa83a;letter-spacing:0.000px;white-space:pre;">0%</div>
<div style="position:absolute;left:1191.64px;top:1074.72px;font-family:'Liberation Sans',sans-serif;font-size:21px;line-height:1;font-weight:400;color:#2e2e30;letter-spacing:0.000px;white-space:pre;">0%</div>
<div style="position:absolute;left:1257.50px;top:1063.00px;width:75.30px;height:46.00px;background:#2a4ea6;border-radius:23px;"></div>
<div style="position:absolute;left:1292.00px;top:1068.60px;width:35.00px;height:34.90px;background:#fff;border-radius:50%;"></div>
<div style="position:absolute;left:1344.60px;top:1063.00px;width:57.00px;height:46.00px;border:1.6px solid #c4c4ca;box-sizing:border-box;border-radius:23px;"></div>
<svg style="position:absolute;left:1361.20px;top:1074.00px;" width="24.00" height="24.00" viewBox="0 0 24 24"><path d="M3.5 20.5 L4.2 16.2 L16.3 4.1 Q17.6 2.8 18.9 4.1 L19.9 5.1 Q21.2 6.4 19.9 7.7 L7.8 19.8 Z" fill="none" stroke="#38383e" stroke-width="2.3" stroke-linejoin="round"/><path d="M15.6 4.8 Q17.6 2.8 19.2 4.4 L19.6 4.8 Q21.2 6.4 19.2 8.4 Z" fill="#38383e"/></svg>
<div style="position:absolute;left:803.60px;top:1152.50px;width:621.20px;height:110.00px;background:#f0f1fa;border-radius:22px;"></div>
<svg style="position:absolute;left:830.30px;top:1193.50px;" width="27.00" height="28.00" viewBox="0 0 27 28"><circle cx="2.5" cy="2" r="1.2" fill="#6f7180"/><circle cx="8.0" cy="2" r="1.2" fill="#6f7180"/><circle cx="13.5" cy="2" r="1.2" fill="#6f7180"/><circle cx="19.0" cy="2" r="1.2" fill="#6f7180"/><circle cx="24.5" cy="2" r="1.2" fill="#6f7180"/><circle cx="2.5" cy="7.3" r="1.2" fill="#6f7180"/><circle cx="2.5" cy="12.6" r="1.2" fill="#6f7180"/><circle cx="2.5" cy="17.9" r="1.2" fill="#6f7180"/><circle cx="24.5" cy="7.3" r="1.2" fill="#6f7180"/><circle cx="24.5" cy="12.6" r="1.2" fill="#6f7180"/><circle cx="24.5" cy="17.9" r="1.2" fill="#6f7180"/><rect x="0.5" y="22" width="26" height="5.8" fill="#2a4ea6"/></svg>
<div style="position:absolute;left:884.40px;top:1182.92px;font-family:'Liberation Sans',sans-serif;font-size:21px;line-height:1;font-weight:400;color:#2e2e30;letter-spacing:-0.649px;white-space:pre;">Front Yard Setback</div>
<div style="position:absolute;left:884.40px;top:1219.58px;font-family:'Liberation Sans',sans-serif;font-size:18.8px;line-height:1;font-weight:400;color:#7a7f94;letter-spacing:-0.981px;white-space:pre;">Suggested Zoning:</div>
<div style="position:absolute;left:1039.50px;top:1219.58px;font-family:'Liberation Sans',sans-serif;font-size:18.8px;line-height:1;font-weight:400;color:#3fa83a;letter-spacing:0.000px;white-space:pre;">10 ft</div>
<div style="position:absolute;left:1181.12px;top:1196.22px;font-family:'Liberation Sans',sans-serif;font-size:21px;line-height:1;font-weight:400;color:#2e2e30;letter-spacing:0.000px;white-space:pre;">10 ft</div>
<div style="position:absolute;left:1344.60px;top:1184.50px;width:57.00px;height:46.00px;border:1.6px solid #c4c4ca;box-sizing:border-box;border-radius:23px;"></div>
<svg style="position:absolute;left:1361.20px;top:1195.50px;" width="24.00" height="24.00" viewBox="0 0 24 24"><path d="M3.5 20.5 L4.2 16.2 L16.3 4.1 Q17.6 2.8 18.9 4.1 L19.9 5.1 Q21.2 6.4 19.9 7.7 L7.8 19.8 Z" fill="none" stroke="#38383e" stroke-width="2.3" stroke-linejoin="round"/><path d="M15.6 4.8 Q17.6 2.8 19.2 4.4 L19.6 4.8 Q21.2 6.4 19.2 8.4 Z" fill="#38383e"/></svg>
<svg style="position:absolute;left:1084.00px;top:1219.00px;" width="20.00" height="20.00" viewBox="0 0 20 20"><circle cx="10" cy="10" r="8.6" fill="none" stroke="#2f6fd6" stroke-width="1.8"/><path d="M7.2 7.6 Q7.2 4.8 10 4.8 Q12.8 4.8 12.8 7.4 Q12.8 9.2 10.2 10.4 V12" fill="none" stroke="#2f6fd6" stroke-width="1.8"/><circle cx="10.1" cy="14.8" r="1.1" fill="#2f6fd6"/></svg>
<div style="position:absolute;left:803.60px;top:1274.00px;width:621.20px;height:110.00px;background:#f0f1fa;border-radius:22px;"></div>
<svg style="position:absolute;left:830.30px;top:1315.50px;" width="27.00" height="27.00" viewBox="0 0 27 27"><circle cx="8.5" cy="2.5" r="1.2" fill="#6f7180"/><circle cx="13.5" cy="2.5" r="1.2" fill="#6f7180"/><circle cx="18.5" cy="2.5" r="1.2" fill="#6f7180"/><circle cx="8.5" cy="24.5" r="1.2" fill="#6f7180"/><circle cx="13.5" cy="24.5" r="1.2" fill="#6f7180"/><circle cx="18.5" cy="24.5" r="1.2" fill="#6f7180"/><rect x="0.5" y="0.5" width="5.5" height="26" fill="#2a4ea6"/><rect x="21" y="0.5" width="5.5" height="26" fill="#2a4ea6"/></svg>
<div style="position:absolute;left:884.40px;top:1304.42px;font-family:'Liberation Sans',sans-serif;font-size:21px;line-height:1;font-weight:400;color:#2e2e30;letter-spacing:-0.824px;white-space:pre;">Side Yard Setback</div>
<div style="position:absolute;left:884.40px;top:1337.48px;font-family:'Liberation Sans',sans-serif;font-size:18.8px;line-height:1;font-weight:400;color:#7a7f94;letter-spacing:-0.981px;white-space:pre;">Suggested Zoning:</div>
<div style="position:absolute;left:1039.50px;top:1337.48px;font-family:'Liberation Sans',sans-serif;font-size:18.8px;line-height:1;font-weight:400;color:#3fa83a;letter-spacing:0.000px;white-space:pre;">10 ft</div>
<div style="position:absolute;left:1181.12px;top:1317.72px;font-family:'Liberation Sans',sans-serif;font-size:21px;line-height:1;font-weight:400;color:#2e2e30;letter-spacing:0.000px;white-space:pre;">10 ft</div>
<div style="position:absolute;left:1344.60px;top:1306.00px;width:57.00px;height:46.00px;border:1.6px solid #c4c4ca;box-sizing:border-box;border-radius:23px;"></div>
<svg style="position:absolute;left:1361.20px;top:1317.00px;" width="24.00" height="24.00" viewBox="0 0 24 24"><path d="M3.5 20.5 L4.2 16.2 L16.3 4.1 Q17.6 2.8 18.9 4.1 L19.9 5.1 Q21.2 6.4 19.9 7.7 L7.8 19.8 Z" fill="none" stroke="#38383e" stroke-width="2.3" stroke-linejoin="round"/><path d="M15.6 4.8 Q17.6 2.8 19.2 4.4 L19.6 4.8 Q21.2 6.4 19.2 8.4 Z" fill="#38383e"/></svg>
<div style="position:absolute;left:803.60px;top:1395.50px;width:621.20px;height:110.00px;background:#f0f1fa;border-radius:22px;"></div>
<svg style="position:absolute;left:830.30px;top:1433.00px;" width="27.00" height="28.00" viewBox="0 0 27 28"><rect x="0.5" y="0.2" width="26" height="5.8" fill="#2a4ea6"/><circle cx="2.5" cy="26" r="1.2" fill="#6f7180"/><circle cx="8.0" cy="26" r="1.2" fill="#6f7180"/><circle cx="13.5" cy="26" r="1.2" fill="#6f7180"/><circle cx="19.0" cy="26" r="1.2" fill="#6f7180"/><circle cx="24.5" cy="26" r="1.2" fill="#6f7180"/><circle cx="2.5" cy="8.0" r="1.2" fill="#6f7180"/><circle cx="2.5" cy="13.3" r="1.2" fill="#6f7180"/><circle cx="2.5" cy="18.6" r="1.2" fill="#6f7180"/><circle cx="24.5" cy="8.0" r="1.2" fill="#6f7180"/><circle cx="24.5" cy="13.3" r="1.2" fill="#6f7180"/><circle cx="24.5" cy="18.6" r="1.2" fill="#6f7180"/></svg>
<div style="position:absolute;left:884.40px;top:1424.52px;font-family:'Liberation Sans',sans-serif;font-size:21px;line-height:1;font-weight:400;color:#2e2e30;letter-spacing:-0.941px;white-space:pre;">Rear Yard Setback</div>
<div style="position:absolute;left:884.40px;top:1461.08px;font-family:'Liberation Sans',sans-serif;font-size:18.8px;line-height:1;font-weight:400;color:#7a7f94;letter-spacing:-0.936px;white-space:pre;">API Value:</div>
<div style="position:absolute;left:975.20px;top:1461.08px;font-family:'Liberation Sans',sans-serif;font-size:18.8px;line-height:1;font-weight:400;color:#3fa83a;letter-spacing:0.000px;white-space:pre;">0 ft</div>
<div style="position:absolute;left:1204.81px;top:1439.22px;font-family:'Liberation Sans',sans-serif;font-size:21px;line-height:1;font-weight:400;color:#2e2e30;letter-spacing:0.000px;white-space:pre;">0 ft</div>
<div style="position:absolute;left:1344.60px;top:1427.50px;width:57.00px;height:46.00px;border:1.6px solid #c4c4ca;box-sizing:border-box;border-radius:23px;"></div>
<svg style="position:absolute;left:1361.20px;top:1438.50px;" width="24.00" height="24.00" viewBox="0 0 24 24"><path d="M3.5 20.5 L4.2 16.2 L16.3 4.1 Q17.6 2.8 18.9 4.1 L19.9 5.1 Q21.2 6.4 19.9 7.7 L7.8 19.8 Z" fill="none" stroke="#38383e" stroke-width="2.3" stroke-linejoin="round"/><path d="M15.6 4.8 Q17.6 2.8 19.2 4.4 L19.6 4.8 Q21.2 6.4 19.2 8.4 Z" fill="#38383e"/></svg>
<div style="position:absolute;left:780.00px;top:1475.50px;width:668.50px;height:75.50px;background:#fafafd;border-top:1.5px solid #dcdde4;box-sizing:border-box;border-radius:0 0 20px 20px;"></div>
<div style="position:absolute;left:815.00px;top:1504.22px;font-family:'Liberation Sans',sans-serif;font-size:21px;line-height:1;font-weight:700;color:#222;letter-spacing:-1.529px;white-space:pre;">Setbacks</div></div></body></html>
